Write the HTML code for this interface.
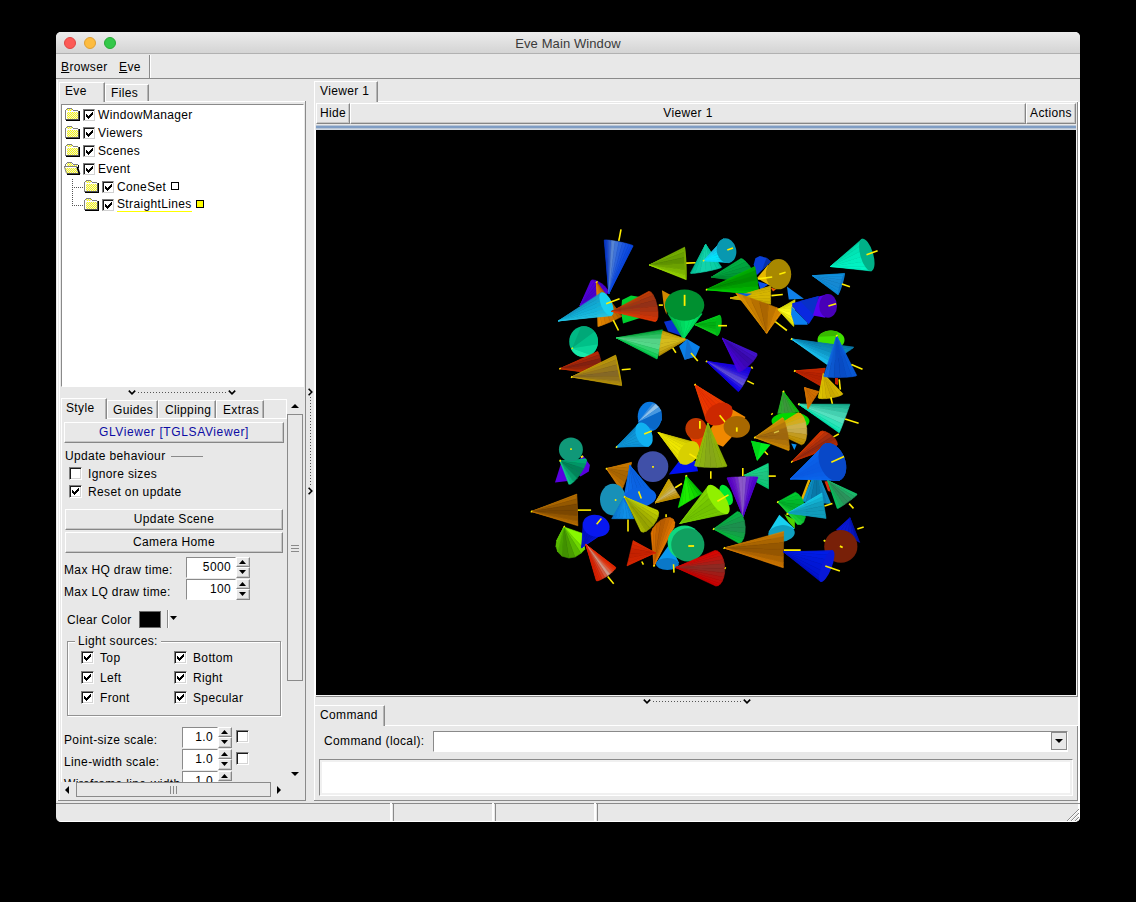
<!DOCTYPE html>
<html><head><meta charset="utf-8">
<style>
html,body{margin:0;padding:0;background:#000;}
body{width:1136px;height:902px;position:relative;overflow:hidden;font-family:"Liberation Sans",sans-serif;font-size:12px;color:#000;letter-spacing:0.36px;}
.a{position:absolute;box-sizing:border-box;}
.t{position:absolute;white-space:nowrap;line-height:14px;height:14px;}
#win{left:56px;top:32px;width:1024px;height:790px;background:#e8e8e8;border-radius:5px;overflow:hidden;}
#title{left:0;top:0;width:1024px;height:22px;background:linear-gradient(#ececec,#d4d4d4);border-bottom:1px solid #b1b1b1;}
.tl{position:absolute;width:12px;height:12px;border-radius:6px;top:5px;box-sizing:border-box;}
.sunk2{border:1px solid;border-color:#8a8a8a #fff #fff #8a8a8a;background:#fff;}
.btn{border:1px solid;border-color:#fff #868686 #868686 #fff;box-shadow:inset -1px -1px 0 #c6c6c6;background:#e8e8e8;text-align:center;}
.cb{border:1px solid;border-color:#7d7d7d #fff #fff #7d7d7d;box-shadow:inset 1px 1px 0 #1a1a1a, inset -1px -1px 0 #d4d4d4;background:#fff;}
.cbt{border:1px solid;border-color:#7d7d7d #d0d0d0 #d0d0d0 #7d7d7d;box-shadow:inset 1px 1px 0 #1a1a1a;background:#fff;}
.tab{border:1px solid;border-color:#fff #8a8a8a transparent #fff;border-bottom:none;background:#e8e8e8;box-shadow:inset -1px 0 0 #b5b5b5;}
</style></head><body>
<svg width="0" height="0" style="position:absolute"><defs>
<pattern id="dith" width="2" height="2" patternUnits="userSpaceOnUse"><rect width="2" height="2" fill="#ffff00"/><rect x="0" y="0" width="1" height="1" fill="#e8e8e8"/><rect x="1" y="1" width="1" height="1" fill="#e8e8e8"/></pattern>
</defs></svg>
<div id="win" class="a">
 <div id="title" class="a">
  <div class="tl" style="left:8px;background:#fc5b57;border:1px solid #df4744"></div>
  <div class="tl" style="left:28px;background:#fdbc40;border:1px solid #de9f34"></div>
  <div class="tl" style="left:48px;background:#34c84a;border:1px solid #27aa35"></div>
  <div class="t" style="left:0;width:1024px;text-align:center;top:5px;font-size:13px;color:#3a3a3a;letter-spacing:0.1px">Eve Main Window</div>
 </div>
</div>
<div id="ui" class="a" style="left:0;top:0;width:1136px;height:902px;clip-path:inset(32px 56px 80px 56px round 5px 5px 5px 5px);">
<div class="a " style="left:56px;top:78px;width:1024px;height:1px;background:#8a8a8a"></div><div class="a " style="left:149px;top:55px;width:1px;height:23px;background:#8a8a8a"></div><div class="a " style="left:150px;top:55px;width:1px;height:23px;background:#fff"></div><div class="t" style="left:61px;top:60px;"><u>B</u>rowser</div><div class="t" style="left:119px;top:60px;"><u>E</u>ve</div><div class="a " style="left:57px;top:80px;width:1px;height:721px;background:#fff"></div><div class="a tab" style="left:59px;top:82px;width:46px;height:20px;"></div><div class="t" style="left:65px;top:84px;">Eve</div><div class="a tab" style="left:105px;top:84px;width:44px;height:18px;"></div><div class="t" style="left:111px;top:86px;">Files</div><div class="a " style="left:105px;top:101px;width:200px;height:1px;background:#fff"></div><div class="a " style="left:59px;top:101px;width:1px;height:699px;background:#fff"></div><div class="a " style="left:305px;top:101px;width:1px;height:700px;background:#8a8a8a"></div><div class="a sunk2" style="left:61px;top:104px;width:243px;height:283px;"></div><svg class="a" style="left:65px;top:108px" width="15" height="13" viewBox="0 0 15 13" shape-rendering="crispEdges"><path d="M1,1 h6 v2 h6 v9 h-12 z" fill="#fff"/><rect x="2" y="1" width="5" height="2" fill="url(#dith)"/><rect x="2" y="4" width="11" height="7" fill="url(#dith)"/><path d="M0.5,2 V12 M2,0.5 H7 M1,1.5 H2 M7,1.5 H8 M8,2.5 H13" stroke="#808080" fill="none"/><path d="M1,11.5 H14 M13.5,3 V12" stroke="#555" fill="none"/><path d="M1,12.5 H15 M14.5,3 V13" stroke="#000" fill="none"/></svg><div class="a cbt" style="left:83px;top:109px;width:12px;height:12px"><div class="a" style="left:2px;top:2px"><svg width="7" height="7" viewBox="0 0 7 7" shape-rendering="crispEdges" style="display:block"><rect x="0" y="2" width="1" height="3"/><rect x="1" y="3" width="1" height="3"/><rect x="2" y="4" width="1" height="3"/><rect x="3" y="3" width="1" height="3"/><rect x="4" y="2" width="1" height="3"/><rect x="5" y="1" width="1" height="3"/><rect x="6" y="0" width="1" height="3"/></svg></div></div><div class="t" style="left:98px;top:108px;">WindowManager</div><svg class="a" style="left:65px;top:126px" width="15" height="13" viewBox="0 0 15 13" shape-rendering="crispEdges"><path d="M1,1 h6 v2 h6 v9 h-12 z" fill="#fff"/><rect x="2" y="1" width="5" height="2" fill="url(#dith)"/><rect x="2" y="4" width="11" height="7" fill="url(#dith)"/><path d="M0.5,2 V12 M2,0.5 H7 M1,1.5 H2 M7,1.5 H8 M8,2.5 H13" stroke="#808080" fill="none"/><path d="M1,11.5 H14 M13.5,3 V12" stroke="#555" fill="none"/><path d="M1,12.5 H15 M14.5,3 V13" stroke="#000" fill="none"/></svg><div class="a cbt" style="left:83px;top:127px;width:12px;height:12px"><div class="a" style="left:2px;top:2px"><svg width="7" height="7" viewBox="0 0 7 7" shape-rendering="crispEdges" style="display:block"><rect x="0" y="2" width="1" height="3"/><rect x="1" y="3" width="1" height="3"/><rect x="2" y="4" width="1" height="3"/><rect x="3" y="3" width="1" height="3"/><rect x="4" y="2" width="1" height="3"/><rect x="5" y="1" width="1" height="3"/><rect x="6" y="0" width="1" height="3"/></svg></div></div><div class="t" style="left:98px;top:126px;">Viewers</div><svg class="a" style="left:65px;top:144px" width="15" height="13" viewBox="0 0 15 13" shape-rendering="crispEdges"><path d="M1,1 h6 v2 h6 v9 h-12 z" fill="#fff"/><rect x="2" y="1" width="5" height="2" fill="url(#dith)"/><rect x="2" y="4" width="11" height="7" fill="url(#dith)"/><path d="M0.5,2 V12 M2,0.5 H7 M1,1.5 H2 M7,1.5 H8 M8,2.5 H13" stroke="#808080" fill="none"/><path d="M1,11.5 H14 M13.5,3 V12" stroke="#555" fill="none"/><path d="M1,12.5 H15 M14.5,3 V13" stroke="#000" fill="none"/></svg><div class="a cbt" style="left:83px;top:145px;width:12px;height:12px"><div class="a" style="left:2px;top:2px"><svg width="7" height="7" viewBox="0 0 7 7" shape-rendering="crispEdges" style="display:block"><rect x="0" y="2" width="1" height="3"/><rect x="1" y="3" width="1" height="3"/><rect x="2" y="4" width="1" height="3"/><rect x="3" y="3" width="1" height="3"/><rect x="4" y="2" width="1" height="3"/><rect x="5" y="1" width="1" height="3"/><rect x="6" y="0" width="1" height="3"/></svg></div></div><div class="t" style="left:98px;top:144px;">Scenes</div><svg class="a" style="left:64px;top:162px" width="17" height="13" viewBox="0 0 17 13" shape-rendering="crispEdges"><path d="M2,1 h6 v2 h6 v3 h-12 z" fill="#fff"/><rect x="3" y="1" width="5" height="2" fill="url(#dith)"/><rect x="3" y="3" width="10" height="2" fill="url(#dith)"/><path d="M1.5,5 V2 M3,0.5 H8 M2,1.5 H3 M8,1.5 H9 M9,2.5 H14" stroke="#808080" fill="none"/><path d="M0,5 h13 l2,7 h-12 z" fill="#fff" stroke="none"/><path d="M1,6 h11 l2,5 h-11 z" fill="url(#dith)"/><path d="M0,4.5 H13" stroke="#808080" fill="none"/><path d="M0.5,5 L2.5,11.5" stroke="#808080" fill="none" shape-rendering="auto"/><path d="M3,11.5 H16" stroke="#555" fill="none"/><path d="M3,12.5 H16 M14.5,3 V6" stroke="#000" fill="none"/><path d="M13.2,5 L15.5,12" stroke="#000" stroke-width="1.8" fill="none" shape-rendering="auto"/></svg><div class="a cbt" style="left:83px;top:163px;width:12px;height:12px"><div class="a" style="left:2px;top:2px"><svg width="7" height="7" viewBox="0 0 7 7" shape-rendering="crispEdges" style="display:block"><rect x="0" y="2" width="1" height="3"/><rect x="1" y="3" width="1" height="3"/><rect x="2" y="4" width="1" height="3"/><rect x="3" y="3" width="1" height="3"/><rect x="4" y="2" width="1" height="3"/><rect x="5" y="1" width="1" height="3"/><rect x="6" y="0" width="1" height="3"/></svg></div></div><div class="t" style="left:98px;top:162px;">Event</div><svg class="a" style="left:84px;top:180px" width="15" height="13" viewBox="0 0 15 13" shape-rendering="crispEdges"><path d="M1,1 h6 v2 h6 v9 h-12 z" fill="#fff"/><rect x="2" y="1" width="5" height="2" fill="url(#dith)"/><rect x="2" y="4" width="11" height="7" fill="url(#dith)"/><path d="M0.5,2 V12 M2,0.5 H7 M1,1.5 H2 M7,1.5 H8 M8,2.5 H13" stroke="#808080" fill="none"/><path d="M1,11.5 H14 M13.5,3 V12" stroke="#555" fill="none"/><path d="M1,12.5 H15 M14.5,3 V13" stroke="#000" fill="none"/></svg><div class="a cbt" style="left:102px;top:181px;width:12px;height:12px"><div class="a" style="left:2px;top:2px"><svg width="7" height="7" viewBox="0 0 7 7" shape-rendering="crispEdges" style="display:block"><rect x="0" y="2" width="1" height="3"/><rect x="1" y="3" width="1" height="3"/><rect x="2" y="4" width="1" height="3"/><rect x="3" y="3" width="1" height="3"/><rect x="4" y="2" width="1" height="3"/><rect x="5" y="1" width="1" height="3"/><rect x="6" y="0" width="1" height="3"/></svg></div></div><div class="t" style="left:117px;top:180px;">ConeSet</div><svg class="a" style="left:84px;top:198px" width="15" height="13" viewBox="0 0 15 13" shape-rendering="crispEdges"><path d="M1,1 h6 v2 h6 v9 h-12 z" fill="#fff"/><rect x="2" y="1" width="5" height="2" fill="url(#dith)"/><rect x="2" y="4" width="11" height="7" fill="url(#dith)"/><path d="M0.5,2 V12 M2,0.5 H7 M1,1.5 H2 M7,1.5 H8 M8,2.5 H13" stroke="#808080" fill="none"/><path d="M1,11.5 H14 M13.5,3 V12" stroke="#555" fill="none"/><path d="M1,12.5 H15 M14.5,3 V13" stroke="#000" fill="none"/></svg><div class="a cbt" style="left:102px;top:199px;width:12px;height:12px"><div class="a" style="left:2px;top:2px"><svg width="7" height="7" viewBox="0 0 7 7" shape-rendering="crispEdges" style="display:block"><rect x="0" y="2" width="1" height="3"/><rect x="1" y="3" width="1" height="3"/><rect x="2" y="4" width="1" height="3"/><rect x="3" y="3" width="1" height="3"/><rect x="4" y="2" width="1" height="3"/><rect x="5" y="1" width="1" height="3"/><rect x="6" y="0" width="1" height="3"/></svg></div></div><div class="t" style="left:117px;top:198px;border-bottom:1px solid #ffff00;height:13px;line-height:13px">StraightLines</div><svg class="a" style="left:70px;top:176px" width="16" height="32" shape-rendering="crispEdges"><path d="M2.5,3 V29 M2,11.5 H14 M2,29.5 H14" stroke="#555" stroke-dasharray="1,1" fill="none"/></svg><div class="a " style="left:171px;top:182px;width:8px;height:8px;border:1px solid #000;background:#fff"></div><div class="a " style="left:196px;top:200px;width:8px;height:8px;border:1px solid #000;background:#ffff00"></div><svg class="a" style="left:128px;top:390px" width="8" height="5"><path d="M0.8,0.6 L4,3.8 L7.2,0.6" fill="none" stroke="#000" stroke-width="1.6"/></svg><svg class="a" style="left:228px;top:390px" width="8" height="5"><path d="M0.8,0.6 L4,3.8 L7.2,0.6" fill="none" stroke="#000" stroke-width="1.6"/></svg><svg class="a" style="left:138px;top:392px" width="90" height="1" shape-rendering="crispEdges"><path d="M0,0.5 H90" stroke="#555" stroke-dasharray="1,2"/></svg><svg class="a" style="left:308px;top:388px" width="5" height="8"><path d="M0.6,0.8 L3.8,4 L0.6,7.2" fill="none" stroke="#000" stroke-width="1.6"/></svg><svg class="a" style="left:308px;top:487px" width="5" height="8"><path d="M0.6,0.8 L3.8,4 L0.6,7.2" fill="none" stroke="#000" stroke-width="1.6"/></svg><svg class="a" style="left:310px;top:397px" width="1" height="90" shape-rendering="crispEdges"><path d="M0.5,0 V90" stroke="#555" stroke-dasharray="1,2"/></svg><div class="a tab" style="left:61px;top:398px;width:46px;height:21px;"></div><div class="t" style="left:66px;top:401px;">Style</div><div class="a tab" style="left:107px;top:400px;width:51px;height:19px;"></div><div class="t" style="left:113px;top:403px;">Guides</div><div class="a tab" style="left:158px;top:400px;width:58px;height:19px;"></div><div class="t" style="left:165px;top:403px;">Clipping</div><div class="a tab" style="left:216px;top:400px;width:48px;height:19px;"></div><div class="t" style="left:223px;top:403px;">Extras</div><div class="a " style="left:107px;top:418px;width:180px;height:1px;background:#fff"></div><div class="a " style="left:264px;top:399px;width:23px;height:1px;background:#fff"></div><div class="a " style="left:286px;top:399px;width:1px;height:20px;background:#fff"></div><div class="a " style="left:61px;top:418px;width:1px;height:364px;background:#fff"></div><div class="a btn" style="left:64px;top:422px;width:220px;height:21px;line-height:18px;color:#0c0ca4;letter-spacing:0.62px">GLViewer [TGLSAViewer]</div><div class="t" style="left:65px;top:449px;">Update behaviour</div><div class="a " style="left:171px;top:456px;width:32px;height:1px;background:#8a8a8a"></div><div class="a cb" style="left:69px;top:467px;width:13px;height:13px;"></div><div class="t" style="left:88px;top:467px;">Ignore sizes</div><div class="a cb" style="left:69px;top:485px;width:13px;height:13px;"><div class="a" style="left:2px;top:2px"><svg width="7" height="7" viewBox="0 0 7 7" shape-rendering="crispEdges" style="display:block"><rect x="0" y="2" width="1" height="3"/><rect x="1" y="3" width="1" height="3"/><rect x="2" y="4" width="1" height="3"/><rect x="3" y="3" width="1" height="3"/><rect x="4" y="2" width="1" height="3"/><rect x="5" y="1" width="1" height="3"/><rect x="6" y="0" width="1" height="3"/></svg></div></div><div class="t" style="left:88px;top:485px;">Reset on update</div><div class="a btn" style="left:65px;top:509px;width:218px;height:21px;line-height:18px;">Update Scene</div><div class="a btn" style="left:65px;top:532px;width:218px;height:21px;line-height:18px;">Camera Home</div><div class="t" style="left:64px;top:563px;">Max HQ draw time:</div><div class="a sunk2" style="left:186px;top:557px;width:50px;height:21px;"></div><div class="t" style="left:186px;top:560px;width:45px;text-align:right">5000</div><div class="a btn" style="left:236px;top:557px;width:14px;height:10px;"></div><svg class="a" style="left:239px;top:560px" width="7" height="4"><path d="M0,4 L3.5,0 L7,4 z" fill="#000"/></svg><div class="a btn" style="left:236px;top:567px;width:14px;height:11px;"></div><svg class="a" style="left:239px;top:570px" width="7" height="4"><path d="M0,0 L3.5,4 L7,0 z" fill="#000"/></svg><div class="t" style="left:64px;top:585px;">Max LQ draw time:</div><div class="a sunk2" style="left:186px;top:579px;width:50px;height:21px;"></div><div class="t" style="left:186px;top:582px;width:45px;text-align:right">100</div><div class="a btn" style="left:236px;top:579px;width:14px;height:10px;"></div><svg class="a" style="left:239px;top:582px" width="7" height="4"><path d="M0,4 L3.5,0 L7,4 z" fill="#000"/></svg><div class="a btn" style="left:236px;top:589px;width:14px;height:11px;"></div><svg class="a" style="left:239px;top:592px" width="7" height="4"><path d="M0,0 L3.5,4 L7,0 z" fill="#000"/></svg><div class="t" style="left:67px;top:613px;">Clear Color</div><div class="a " style="left:139px;top:611px;width:22px;height:17px;background:#000;border:1px solid #6a6a6a"></div><div class="a " style="left:167px;top:610px;width:1px;height:18px;background:#8a8a8a"></div><div class="a " style="left:168px;top:610px;width:1px;height:18px;background:#fff"></div><svg class="a" style="left:170px;top:616px" width="7" height="4"><path d="M0,0 L3.5,4 L7,0 z" fill="#000"/></svg><div class="a " style="left:68px;top:642px;width:214px;height:75px;border:1px solid #fff;"></div><div class="a " style="left:67px;top:641px;width:214px;height:75px;border:1px solid #929292;"></div><div class="a " style="left:75px;top:634px;width:86px;height:14px;background:#e8e8e8"></div><div class="t" style="left:78px;top:634px;">Light sources:</div><div class="a cb" style="left:81px;top:651px;width:13px;height:13px;"><div class="a" style="left:2px;top:2px"><svg width="7" height="7" viewBox="0 0 7 7" shape-rendering="crispEdges" style="display:block"><rect x="0" y="2" width="1" height="3"/><rect x="1" y="3" width="1" height="3"/><rect x="2" y="4" width="1" height="3"/><rect x="3" y="3" width="1" height="3"/><rect x="4" y="2" width="1" height="3"/><rect x="5" y="1" width="1" height="3"/><rect x="6" y="0" width="1" height="3"/></svg></div></div><div class="t" style="left:100px;top:651px;">Top</div><div class="a cb" style="left:174px;top:651px;width:13px;height:13px;"><div class="a" style="left:2px;top:2px"><svg width="7" height="7" viewBox="0 0 7 7" shape-rendering="crispEdges" style="display:block"><rect x="0" y="2" width="1" height="3"/><rect x="1" y="3" width="1" height="3"/><rect x="2" y="4" width="1" height="3"/><rect x="3" y="3" width="1" height="3"/><rect x="4" y="2" width="1" height="3"/><rect x="5" y="1" width="1" height="3"/><rect x="6" y="0" width="1" height="3"/></svg></div></div><div class="t" style="left:193px;top:651px;">Bottom</div><div class="a cb" style="left:81px;top:671px;width:13px;height:13px;"><div class="a" style="left:2px;top:2px"><svg width="7" height="7" viewBox="0 0 7 7" shape-rendering="crispEdges" style="display:block"><rect x="0" y="2" width="1" height="3"/><rect x="1" y="3" width="1" height="3"/><rect x="2" y="4" width="1" height="3"/><rect x="3" y="3" width="1" height="3"/><rect x="4" y="2" width="1" height="3"/><rect x="5" y="1" width="1" height="3"/><rect x="6" y="0" width="1" height="3"/></svg></div></div><div class="t" style="left:100px;top:671px;">Left</div><div class="a cb" style="left:174px;top:671px;width:13px;height:13px;"><div class="a" style="left:2px;top:2px"><svg width="7" height="7" viewBox="0 0 7 7" shape-rendering="crispEdges" style="display:block"><rect x="0" y="2" width="1" height="3"/><rect x="1" y="3" width="1" height="3"/><rect x="2" y="4" width="1" height="3"/><rect x="3" y="3" width="1" height="3"/><rect x="4" y="2" width="1" height="3"/><rect x="5" y="1" width="1" height="3"/><rect x="6" y="0" width="1" height="3"/></svg></div></div><div class="t" style="left:193px;top:671px;">Right</div><div class="a cb" style="left:81px;top:691px;width:13px;height:13px;"><div class="a" style="left:2px;top:2px"><svg width="7" height="7" viewBox="0 0 7 7" shape-rendering="crispEdges" style="display:block"><rect x="0" y="2" width="1" height="3"/><rect x="1" y="3" width="1" height="3"/><rect x="2" y="4" width="1" height="3"/><rect x="3" y="3" width="1" height="3"/><rect x="4" y="2" width="1" height="3"/><rect x="5" y="1" width="1" height="3"/><rect x="6" y="0" width="1" height="3"/></svg></div></div><div class="t" style="left:100px;top:691px;">Front</div><div class="a cb" style="left:174px;top:691px;width:13px;height:13px;"><div class="a" style="left:2px;top:2px"><svg width="7" height="7" viewBox="0 0 7 7" shape-rendering="crispEdges" style="display:block"><rect x="0" y="2" width="1" height="3"/><rect x="1" y="3" width="1" height="3"/><rect x="2" y="4" width="1" height="3"/><rect x="3" y="3" width="1" height="3"/><rect x="4" y="2" width="1" height="3"/><rect x="5" y="1" width="1" height="3"/><rect x="6" y="0" width="1" height="3"/></svg></div></div><div class="t" style="left:193px;top:691px;">Specular</div><div class="t" style="left:64px;top:733px;">Point-size scale:</div><div class="a sunk2" style="left:182px;top:727px;width:36px;height:21px;"></div><div class="t" style="left:182px;top:730px;width:31px;text-align:right">1.0</div><div class="a btn" style="left:218px;top:727px;width:14px;height:10px;"></div><svg class="a" style="left:221px;top:730px" width="7" height="4"><path d="M0,4 L3.5,0 L7,4 z" fill="#000"/></svg><div class="a btn" style="left:218px;top:737px;width:14px;height:11px;"></div><svg class="a" style="left:221px;top:740px" width="7" height="4"><path d="M0,0 L3.5,4 L7,0 z" fill="#000"/></svg><div class="a cb" style="left:236px;top:730px;width:13px;height:13px;"></div><div class="t" style="left:64px;top:755px;">Line-width scale:</div><div class="a sunk2" style="left:182px;top:749px;width:36px;height:21px;"></div><div class="t" style="left:182px;top:752px;width:31px;text-align:right">1.0</div><div class="a btn" style="left:218px;top:749px;width:14px;height:10px;"></div><svg class="a" style="left:221px;top:752px" width="7" height="4"><path d="M0,4 L3.5,0 L7,4 z" fill="#000"/></svg><div class="a btn" style="left:218px;top:759px;width:14px;height:11px;"></div><svg class="a" style="left:221px;top:762px" width="7" height="4"><path d="M0,0 L3.5,4 L7,0 z" fill="#000"/></svg><div class="a cb" style="left:236px;top:752px;width:13px;height:13px;"></div><div class="a" style="left:60px;top:771px;width:226px;height:11px;overflow:hidden"><div class="t" style="left:4px;top:6px">Wireframe line-width</div><div class="a sunk2" style="left:122px;top:0;width:36px;height:20px"></div><div class="t" style="left:122px;top:3px;width:31px;text-align:right">1.0</div><div class="a btn" style="left:158px;top:0;width:14px;height:10px"></div><svg class="a" style="left:161px;top:3px" width="7" height="4"><path d="M0,4 L3.5,0 L7,4 z" fill="#000"/></svg></div><svg class="a" style="left:291px;top:404px" width="8" height="4"><path d="M0,4 L4,0 L8,4 z" fill="#000"/></svg><div class="a " style="left:287px;top:414px;width:16px;height:267px;border:1px solid #8a8a8a"></div><div class="a " style="left:291px;top:545px;width:8px;height:1px;background:#8a8a8a"></div><div class="a " style="left:291px;top:548px;width:8px;height:1px;background:#8a8a8a"></div><div class="a " style="left:291px;top:551px;width:8px;height:1px;background:#8a8a8a"></div><svg class="a" style="left:291px;top:772px" width="8" height="4"><path d="M0,0 L4,4 L8,0 z" fill="#000"/></svg><svg class="a" style="left:65px;top:786px" width="4" height="8"><path d="M4,0 L0,4 L4,8 z" fill="#000"/></svg><div class="a " style="left:76px;top:782px;width:195px;height:15px;border:1px solid #8a8a8a"></div><div class="a " style="left:170px;top:786px;width:1px;height:8px;background:#8a8a8a"></div><div class="a " style="left:173px;top:786px;width:1px;height:8px;background:#8a8a8a"></div><div class="a " style="left:176px;top:786px;width:1px;height:8px;background:#8a8a8a"></div><svg class="a" style="left:277px;top:786px" width="4" height="8"><path d="M0,0 L4,4 L0,8 z" fill="#000"/></svg><div class="a " style="left:58px;top:800px;width:248px;height:1px;background:#8a8a8a"></div><div class="a " style="left:314px;top:83px;width:1px;height:718px;background:#fff"></div><div class="a " style="left:1077px;top:102px;width:1px;height:595px;background:#8a8a8a"></div><div class="a " style="left:1077px;top:725px;width:1px;height:76px;background:#8a8a8a"></div><div class="a " style="left:1078px;top:102px;width:2px;height:720px;background:#fff"></div><div class="a " style="left:316px;top:696px;width:762px;height:1px;background:#8a8a8a"></div><div class="a tab" style="left:314px;top:81px;width:64px;height:21px;"></div><div class="t" style="left:320px;top:84px;">Viewer 1</div><div class="a " style="left:378px;top:101px;width:700px;height:1px;background:#fff"></div><div class="a btn" style="left:316px;top:103px;width:34px;height:21px;line-height:18px;">Hide</div><div class="a btn" style="left:350px;top:103px;width:676px;height:21px;line-height:18px;">Viewer 1</div><div class="a btn" style="left:1026px;top:103px;width:50px;height:21px;line-height:18px;">Actions</div><div class="a " style="left:316px;top:125px;width:760px;height:1px;background:#b9c6d6"></div><div class="a " style="left:316px;top:126px;width:760px;height:2px;background:#7f9dc4"></div><div class="a " style="left:316px;top:128px;width:760px;height:1px;background:#b9c6d6"></div><div class="a " style="left:315px;top:129px;width:762px;height:567px;background:#000;border:1px solid;border-color:#d0d8e2 #f4f4f4 #f4f4f4 #fff"></div><svg class="a" style="left:316px;top:130px" width="760" height="565" viewBox="316 130 760 565" stroke-linejoin="round"><polygon points="580,305.5 591,280.5 592.7,279.9" fill="#5800e4" stroke="#5800e4" stroke-width="0.6"/><polygon points="580,305.5 592.7,279.9 595.5,280.4" fill="#5300dc" stroke="#5300dc" stroke-width="0.6"/><polygon points="580,305.5 595.5,280.4 598.8,281.9" fill="#4f00d4" stroke="#4f00d4" stroke-width="0.6"/><polygon points="580,305.5 598.8,281.9 602.2,284.1" fill="#4a00cc" stroke="#4a00cc" stroke-width="0.6"/><polygon points="580,305.5 602.2,284.1 605.2,286.7" fill="#4a00cc" stroke="#4a00cc" stroke-width="0.6"/><polygon points="580,305.5 605.2,286.7 607.3,289.4" fill="#4f00d4" stroke="#4f00d4" stroke-width="0.6"/><polygon points="580,305.5 607.3,289.4 608.2,291.7" fill="#5300dc" stroke="#5300dc" stroke-width="0.6"/><polygon points="580,305.5 608.2,291.7 607.7,293.2" fill="#5800e4" stroke="#5800e4" stroke-width="0.6"/><polygon points="608.8,293.5 604.2,240.1 604.8,239.9" fill="#0838c8" stroke="#0838c8" stroke-width="0.6"/><polygon points="608.8,293.5 604.8,239.9 606.2,239.9" fill="#0b3bc8" stroke="#0b3bc8" stroke-width="0.6"/><polygon points="608.8,293.5 606.2,239.9 608.6,240.1" fill="#1645ca" stroke="#1645ca" stroke-width="0.6"/><polygon points="608.8,293.5 608.6,240.1 611.6,240.5" fill="#2d5ccd" stroke="#2d5ccd" stroke-width="0.6"/><polygon points="608.8,293.5 611.6,240.5 615.1,241.1" fill="#5785d4" stroke="#5785d4" stroke-width="0.6"/><polygon points="608.8,293.5 615.1,241.1 618.9,241.8" fill="#3f73d8" stroke="#3f73d8" stroke-width="0.6"/><polygon points="608.8,293.5 618.9,241.8 622.6,242.6" fill="#2a62db" stroke="#2a62db" stroke-width="0.6"/><polygon points="608.8,293.5 622.6,242.6 626.1,243.4" fill="#1c56dd" stroke="#1c56dd" stroke-width="0.6"/><polygon points="608.8,293.5 626.1,243.4 629,244.2" fill="#124fdf" stroke="#124fdf" stroke-width="0.6"/><polygon points="608.8,293.5 629,244.2 631.3,244.9" fill="#0d4ae0" stroke="#0d4ae0" stroke-width="0.6"/><polygon points="608.8,293.5 631.3,244.9 632.7,245.5" fill="#0b49e0" stroke="#0b49e0" stroke-width="0.6"/><polygon points="608.8,293.5 632.7,245.5 633.1,245.9" fill="#0a48e0" stroke="#0a48e0" stroke-width="0.6"/><line x1="621" y1="229.4" x2="618.8" y2="240.9" stroke="#ffee00" stroke-width="1.6"/><polygon points="649.3,265 684.6,247.2 684.7,248.4" fill="#7eb900" stroke="#7eb900" stroke-width="0.6"/><polygon points="649.3,265 684.7,248.4 684.8,252" fill="#73ac00" stroke="#73ac00" stroke-width="0.6"/><polygon points="649.3,265 684.8,252 685.1,257.2" fill="#689f00" stroke="#689f00" stroke-width="0.6"/><polygon points="649.3,265 685.1,257.2 685.4,263.4" fill="#5d9100" stroke="#5d9100" stroke-width="0.6"/><polygon points="649.3,265 685.4,263.4 685.7,269.7" fill="#6ba100" stroke="#6ba100" stroke-width="0.6"/><polygon points="649.3,265 685.7,269.7 686,274.9" fill="#7bb400" stroke="#7bb400" stroke-width="0.6"/><polygon points="649.3,265 686,274.9 686.1,278.5" fill="#8bc700" stroke="#8bc700" stroke-width="0.6"/><polygon points="649.3,265 686.1,278.5 686.2,279.7" fill="#9cda00" stroke="#9cda00" stroke-width="0.6"/><ellipse cx="685.4" cy="263.4" rx="16.3" ry="1.1" fill="#78a800" transform="rotate(87.2 685.4 263.4)"/><line x1="686.2" y1="263.1" x2="695.7" y2="262.7" stroke="#ffee00" stroke-width="1.6"/><polygon points="622,300 631,295.5 640,297 640,318 623,323.5 621,312" fill="#00d030"/><polygon points="596.6,282.1 597.9,326.5 598.9,326.3" fill="#ec8d00" stroke="#ec8d00" stroke-width="0.6"/><polygon points="596.6,282.1 598.9,326.3 601.6,325.4" fill="#e48600" stroke="#e48600" stroke-width="0.6"/><polygon points="596.6,282.1 601.6,325.4 605.5,323.9" fill="#db7f00" stroke="#db7f00" stroke-width="0.6"/><polygon points="596.6,282.1 605.5,323.9 610.2,322" fill="#d37900" stroke="#d37900" stroke-width="0.6"/><polygon points="596.6,282.1 610.2,322 614.8,320" fill="#ca7200" stroke="#ca7200" stroke-width="0.6"/><polygon points="596.6,282.1 614.8,320 618.6,318.1" fill="#bf6900" stroke="#bf6900" stroke-width="0.6"/><polygon points="596.6,282.1 618.6,318.1 621.2,316.8" fill="#b35f00" stroke="#b35f00" stroke-width="0.6"/><polygon points="596.6,282.1 621.2,316.8 622,316.2" fill="#a65500" stroke="#a65500" stroke-width="0.6"/><line x1="613.3" y1="320.1" x2="618.5" y2="330.5" stroke="#ffee00" stroke-width="1.6"/><polygon points="558.5,320.9 601.4,292.4 601.8,293.3" fill="#1794c3" stroke="#1794c3" stroke-width="0.6"/><polygon points="558.5,320.9 601.8,293.3 602.9,295.8" fill="#159cc9" stroke="#159cc9" stroke-width="0.6"/><polygon points="558.5,320.9 602.9,295.8 604.6,299.6" fill="#13a4cf" stroke="#13a4cf" stroke-width="0.6"/><polygon points="558.5,320.9 604.6,299.6 606.5,304" fill="#11acd5" stroke="#11acd5" stroke-width="0.6"/><polygon points="558.5,320.9 606.5,304 608.5,308.5" fill="#13b3da" stroke="#13b3da" stroke-width="0.6"/><polygon points="558.5,320.9 608.5,308.5 610.2,312.3" fill="#19b9de" stroke="#19b9de" stroke-width="0.6"/><polygon points="558.5,320.9 610.2,312.3 611.3,314.8" fill="#1fbfe2" stroke="#1fbfe2" stroke-width="0.6"/><polygon points="558.5,320.9 611.3,314.8 611.7,315.7" fill="#25c5e6" stroke="#25c5e6" stroke-width="0.6"/><ellipse cx="606.5" cy="304" rx="12.7" ry="5.5" fill="#18d0f0" transform="rotate(66.2 606.5 304)"/><line x1="606.1" y1="303.8" x2="619.6" y2="298.7" stroke="#ffee00" stroke-width="1.6"/><line x1="596.3" y1="281.5" x2="597" y2="282.5" stroke="#ffee00" stroke-width="2.2"/><polygon points="611.7,311.4 648.9,291.3 651.1,292.2" fill="#c63e04" stroke="#c63e04" stroke-width="0.6"/><polygon points="611.7,311.4 651.1,292.2 653.4,295.3" fill="#b3390b" stroke="#b3390b" stroke-width="0.6"/><polygon points="611.7,311.4 653.4,295.3 655.6,300.1" fill="#a03412" stroke="#a03412" stroke-width="0.6"/><polygon points="611.7,311.4 655.6,300.1 657.2,305.9" fill="#933017" stroke="#933017" stroke-width="0.6"/><polygon points="611.7,311.4 657.2,305.9 658,311.7" fill="#a63212" stroke="#a63212" stroke-width="0.6"/><polygon points="611.7,311.4 658,311.7 658,316.8" fill="#b9340d" stroke="#b9340d" stroke-width="0.6"/><polygon points="611.7,311.4 658,316.8 657,320.3" fill="#cc3508" stroke="#cc3508" stroke-width="0.6"/><polygon points="611.7,311.4 657,320.3 655.3,321.7" fill="#df3703" stroke="#df3703" stroke-width="0.6"/><line x1="658.8" y1="305.1" x2="662.9" y2="305.1" stroke="#ffee00" stroke-width="1.6"/><polygon points="661.9,290.3 670.3,294.8 668,300 666.4,314.6 664,307.5" fill="#d08800"/><polygon points="664,321.7 672,320.1 682.2,336 668,331.2" fill="#0a30d0"/><polygon points="683.5,339.2 667.9,313.8 669.2,313.8" fill="#00b64b" stroke="#00b64b" stroke-width="0.6"/><polygon points="683.5,339.2 669.2,313.8 672.9,313.8" fill="#00c252" stroke="#00c252" stroke-width="0.6"/><polygon points="683.5,339.2 672.9,313.8 678.5,313.8" fill="#00cd59" stroke="#00cd59" stroke-width="0.6"/><polygon points="683.5,339.2 678.5,313.8 685,313.8" fill="#00d95f" stroke="#00d95f" stroke-width="0.6"/><polygon points="683.5,339.2 685,313.8 691.5,313.8" fill="#00e466" stroke="#00e466" stroke-width="0.6"/><polygon points="683.5,339.2 691.5,313.8 697.1,313.8" fill="#00e464" stroke="#00e464" stroke-width="0.6"/><polygon points="683.5,339.2 697.1,313.8 700.8,313.8" fill="#00e060" stroke="#00e060" stroke-width="0.6"/><polygon points="683.5,339.2 700.8,313.8 702.1,313.8" fill="#00da5a" stroke="#00da5a" stroke-width="0.6"/><ellipse cx="684.6" cy="305.1" rx="19.7" ry="15.6" fill="#009030" transform="rotate(0 684.6 305.1)"/><line x1="684.6" y1="294.8" x2="684.6" y2="305.9" stroke="#ffee00" stroke-width="1.8"/><ellipse cx="583.6" cy="341.6" rx="14.4" ry="15.4" fill="#00b884" transform="rotate(0 583.6 341.6)"/><polygon points="572.2,348.2 581.1,326.4 583,326.2 584.9,326.3 586.7,326.6 588.5,327.1 590.2,327.9 591.9,329 593.3,330.2 594.6,331.7" fill="#00a878"/><polygon points="572.2,348.2 594.6,331.7 595.6,333 596.4,334.5 597,336 597.5,337.6 597.8,339.3 598,340.9 598,342.6 597.8,344.3" fill="#00c088"/><polygon points="572.2,348.2 597.8,344.3 597.4,345.9 596.9,347.5 596.2,349 595.4,350.4 594.4,351.8 593.3,353 592.1,354 590.8,354.9" fill="#08d498"/><polygon points="572.2,348.2 590.8,354.9 588.2,356.2 585.5,356.9 582.7,357 579.9,356.5 577.2,355.4 574.8,353.8 572.8,351.8 571.1,349.3" fill="#18e8a8"/><line x1="571.8" y1="347.8" x2="572.6" y2="348.8" stroke="#ffee00" stroke-width="1.8"/><polygon points="616.4,337.9 662.4,329.7 662.5,330.9" fill="#04aa3b" stroke="#04aa3b" stroke-width="0.6"/><polygon points="616.4,337.9 662.5,330.9 662.2,334.1" fill="#16b34c" stroke="#16b34c" stroke-width="0.6"/><polygon points="616.4,337.9 662.2,334.1 661.5,338.9" fill="#31c165" stroke="#31c165" stroke-width="0.6"/><polygon points="616.4,337.9 661.5,338.9 660.5,344.5" fill="#54d286" stroke="#54d286" stroke-width="0.6"/><polygon points="616.4,337.9 660.5,344.5 659.4,350.1" fill="#54d889" stroke="#54d889" stroke-width="0.6"/><polygon points="616.4,337.9 659.4,350.1 658.3,354.8" fill="#31d16e" stroke="#31d16e" stroke-width="0.6"/><polygon points="616.4,337.9 658.3,354.8 657.4,357.9" fill="#16cc59" stroke="#16cc59" stroke-width="0.6"/><polygon points="616.4,337.9 657.4,357.9 656.9,359" fill="#04c94b" stroke="#04c94b" stroke-width="0.6"/><polygon points="686.2,339.5 662.9,330.9 662.5,331.9" fill="#c39d04" stroke="#c39d04" stroke-width="0.6"/><polygon points="686.2,339.5 662.5,331.9 661.9,334.6" fill="#c9a70c" stroke="#c9a70c" stroke-width="0.6"/><polygon points="686.2,339.5 661.9,334.6 661.2,338.7" fill="#cfb114" stroke="#cfb114" stroke-width="0.6"/><polygon points="686.2,339.5 661.2,338.7 660.4,343.4" fill="#d5bb1c" stroke="#d5bb1c" stroke-width="0.6"/><polygon points="686.2,339.5 660.4,343.4 659.8,348.2" fill="#d3b91c" stroke="#d3b91c" stroke-width="0.6"/><polygon points="686.2,339.5 659.8,348.2 659.3,352.2" fill="#c9ab14" stroke="#c9ab14" stroke-width="0.6"/><polygon points="686.2,339.5 659.3,352.2 659.1,354.9" fill="#bf9d0c" stroke="#bf9d0c" stroke-width="0.6"/><polygon points="686.2,339.5 659.1,354.9 659.2,355.8" fill="#b58f04" stroke="#b58f04" stroke-width="0.6"/><line x1="672.7" y1="347.9" x2="675.9" y2="352.7" stroke="#ffee00" stroke-width="1.6"/><polygon points="687,338.9 700,346.8 695.7,356.6 684.6,359.8 679.1,346.3" fill="#0a80e8"/><polygon points="687,338.9 695.7,356.6 684.6,359.8" fill="#1070d0"/><line x1="691" y1="353.1" x2="697.8" y2="361" stroke="#ffee00" stroke-width="1.6"/><polygon points="705.6,244.3 690.3,273.2 691.5,273.5" fill="#03bc94" stroke="#03bc94" stroke-width="0.6"/><polygon points="705.6,244.3 691.5,273.5 694.9,273.2" fill="#08c49c" stroke="#08c49c" stroke-width="0.6"/><polygon points="705.6,244.3 694.9,273.2 700,272.5" fill="#0ecba3" stroke="#0ecba3" stroke-width="0.6"/><polygon points="705.6,244.3 700,272.5 706,271.5" fill="#13d3ab" stroke="#13d3ab" stroke-width="0.6"/><polygon points="705.6,244.3 706,271.5 712,270.2" fill="#10d2aa" stroke="#10d2aa" stroke-width="0.6"/><polygon points="705.6,244.3 712,270.2 717,269" fill="#0bcfa7" stroke="#0bcfa7" stroke-width="0.6"/><polygon points="705.6,244.3 717,269 720.4,267.9" fill="#07cca4" stroke="#07cca4" stroke-width="0.6"/><polygon points="705.6,244.3 720.4,267.9 721.6,267.2" fill="#02c9a1" stroke="#02c9a1" stroke-width="0.6"/><polygon points="703.5,260.7 723.8,238.5 724,239.4" fill="#24bdea" stroke="#24bdea" stroke-width="0.6"/><polygon points="703.5,260.7 724,239.4 724.6,242" fill="#1cc7ef" stroke="#1cc7ef" stroke-width="0.6"/><polygon points="703.5,260.7 724.6,242 725.5,246" fill="#13d1f4" stroke="#13d1f4" stroke-width="0.6"/><polygon points="703.5,260.7 725.5,246 726.5,250.6" fill="#0bdbf9" stroke="#0bdbf9" stroke-width="0.6"/><polygon points="703.5,260.7 726.5,250.6 727.6,255.2" fill="#02e5fe" stroke="#02e5fe" stroke-width="0.6"/><polygon points="703.5,260.7 727.6,255.2 728.5,259.2" fill="#04e3fc" stroke="#04e3fc" stroke-width="0.6"/><polygon points="703.5,260.7 728.5,259.2 729.1,261.8" fill="#08dbf7" stroke="#08dbf7" stroke-width="0.6"/><polygon points="703.5,260.7 729.1,261.8 729.3,262.7" fill="#0ed4f2" stroke="#0ed4f2" stroke-width="0.6"/><ellipse cx="726.5" cy="250.6" rx="12.4" ry="9.7" fill="#0898b0" transform="rotate(77.2 726.5 250.6)"/><line x1="727.3" y1="250.1" x2="733" y2="248" stroke="#ffee00" stroke-width="1.6"/><line x1="703.2" y1="260.2" x2="704" y2="261.2" stroke="#ffee00" stroke-width="2"/><polygon points="711.6,277.1 741,258.5 743,259.2" fill="#00b446" stroke="#00b446" stroke-width="0.6"/><polygon points="711.6,277.1 743,259.2 746,261.8" fill="#00ac42" stroke="#00ac42" stroke-width="0.6"/><polygon points="711.6,277.1 746,261.8 749.4,265.8" fill="#00a43e" stroke="#00a43e" stroke-width="0.6"/><polygon points="711.6,277.1 749.4,265.8 752.7,270.7" fill="#009c3a" stroke="#009c3a" stroke-width="0.6"/><polygon points="711.6,277.1 752.7,270.7 755.5,275.6" fill="#009637" stroke="#009637" stroke-width="0.6"/><polygon points="711.6,277.1 755.5,275.6 757.3,279.9" fill="#009235" stroke="#009235" stroke-width="0.6"/><polygon points="711.6,277.1 757.3,279.9 757.8,282.8" fill="#008e33" stroke="#008e33" stroke-width="0.6"/><polygon points="711.6,277.1 757.8,282.8 757,284" fill="#008a31" stroke="#008a31" stroke-width="0.6"/><polygon points="753.7,264.4 755.4,258.3 759.8,256.1 766.5,257.7 770.9,261.6 756.5,275.5" fill="#0a40d8"/><polygon points="766.5,257.7 770.9,261.6 762,270" fill="#0830a8"/><polygon points="706.3,289.7 754.7,266.5 755,267.5" fill="#00bb00" stroke="#00bb00" stroke-width="0.6"/><polygon points="706.3,289.7 755,267.5 755.6,270.6" fill="#00a800" stroke="#00a800" stroke-width="0.6"/><polygon points="706.3,289.7 755.6,270.6 756.4,275.2" fill="#009500" stroke="#009500" stroke-width="0.6"/><polygon points="706.3,289.7 756.4,275.2 757.3,280.6" fill="#008d00" stroke="#008d00" stroke-width="0.6"/><polygon points="706.3,289.7 757.3,280.6 758.1,286" fill="#009f00" stroke="#009f00" stroke-width="0.6"/><polygon points="706.3,289.7 758.1,286 758.7,290.6" fill="#00b000" stroke="#00b000" stroke-width="0.6"/><polygon points="706.3,289.7 758.7,290.6 759,293.7" fill="#00c200" stroke="#00c200" stroke-width="0.6"/><polygon points="706.3,289.7 759,293.7 759,294.8" fill="#00d300" stroke="#00d300" stroke-width="0.6"/><line x1="706" y1="289.3" x2="707" y2="290" stroke="#ffee00" stroke-width="2"/><polygon points="757.9,281.3 768.2,284.5 760.3,290" fill="#0a50e8"/><polygon points="770.6,287.6 776.1,289.2 773,291.6" fill="#f05800"/><polygon points="730.1,298.3 770.6,286 770.6,286.7" fill="#caaa00" stroke="#caaa00" stroke-width="0.6"/><polygon points="730.1,298.3 770.6,286.7 770.6,288.7" fill="#ceae00" stroke="#ceae00" stroke-width="0.6"/><polygon points="730.1,298.3 770.6,288.7 770.6,291.6" fill="#d2b200" stroke="#d2b200" stroke-width="0.6"/><polygon points="730.1,298.3 770.6,291.6 770.6,295.1" fill="#d6b600" stroke="#d6b600" stroke-width="0.6"/><polygon points="730.1,298.3 770.6,295.1 770.6,298.7" fill="#d6b600" stroke="#d6b600" stroke-width="0.6"/><polygon points="730.1,298.3 770.6,298.7 770.6,301.6" fill="#d2b200" stroke="#d2b200" stroke-width="0.6"/><polygon points="730.1,298.3 770.6,301.6 770.6,303.6" fill="#ceae00" stroke="#ceae00" stroke-width="0.6"/><polygon points="730.1,298.3 770.6,303.6 770.6,304.3" fill="#caaa00" stroke="#caaa00" stroke-width="0.6"/><line x1="771.4" y1="295.6" x2="782.8" y2="294.5" stroke="#ffee00" stroke-width="1.6"/><polygon points="768.2,264.6 757.1,278.1 770.6,286" fill="#e8b800"/><ellipse cx="778.5" cy="274.2" rx="12.7" ry="15.1" fill="#a88800" transform="rotate(0 778.5 274.2)"/><line x1="779.3" y1="274.2" x2="785.6" y2="272.3" stroke="#ffee00" stroke-width="1.6"/><line x1="757.9" y1="278.9" x2="772.2" y2="277" stroke="#ffee00" stroke-width="1.6"/><polygon points="737.6,293 752,293.8 742,298.5" fill="#0a60e0"/><polygon points="766.6,333.2 735.7,293.2 737.4,293.6" fill="#e89900" stroke="#e89900" stroke-width="0.6"/><polygon points="766.6,333.2 737.4,293.6 742.6,295.2" fill="#d78c00" stroke="#d78c00" stroke-width="0.6"/><polygon points="766.6,333.2 742.6,295.2 750.2,297.9" fill="#c77e00" stroke="#c77e00" stroke-width="0.6"/><polygon points="766.6,333.2 750.2,297.9 759.3,301.2" fill="#b77000" stroke="#b77000" stroke-width="0.6"/><polygon points="766.6,333.2 759.3,301.2 768.5,304.5" fill="#aa6500" stroke="#aa6500" stroke-width="0.6"/><polygon points="766.6,333.2 768.5,304.5 776.2,307.5" fill="#be7400" stroke="#be7400" stroke-width="0.6"/><polygon points="766.6,333.2 776.2,307.5 781.4,309.7" fill="#d28200" stroke="#d28200" stroke-width="0.6"/><polygon points="766.6,333.2 781.4,309.7 783.3,310.6" fill="#e69100" stroke="#e69100" stroke-width="0.6"/><line x1="775.3" y1="321.7" x2="786.9" y2="330.5" stroke="#ffee00" stroke-width="1.6"/><polygon points="778,309.5 795.1,299.5 795,300.5" fill="#cece04" stroke="#cece04" stroke-width="0.6"/><polygon points="778,309.5 795,300.5 794.9,303.5" fill="#dbdb0b" stroke="#dbdb0b" stroke-width="0.6"/><polygon points="778,309.5 794.9,303.5 794.6,307.8" fill="#e7e712" stroke="#e7e712" stroke-width="0.6"/><polygon points="778,309.5 794.6,307.8 794.4,313" fill="#f4f419" stroke="#f4f419" stroke-width="0.6"/><polygon points="778,309.5 794.4,313 794.1,318.2" fill="#fefe1f" stroke="#fefe1f" stroke-width="0.6"/><polygon points="778,309.5 794.1,318.2 793.8,322.5" fill="#f3f316" stroke="#f3f316" stroke-width="0.6"/><polygon points="778,309.5 793.8,322.5 793.7,325.5" fill="#e8e80d" stroke="#e8e80d" stroke-width="0.6"/><polygon points="778,309.5 793.7,325.5 793.6,326.5" fill="#dddd04" stroke="#dddd04" stroke-width="0.6"/><polygon points="786.9,286.5 803.9,298.7 788.8,299.5" fill="#1080e8"/><polygon points="792.2,303.2 818.8,296 814.4,315.4 808.8,324.3 806.6,322 792.2,306.5" fill="#0a28e0"/><polygon points="800,301 818.8,296 814.4,315.4" fill="#0830c8"/><polygon points="791.6,306.5 807.2,322.6 807.7,324.8 794.4,324.8 791.1,314.3" fill="#0a80f0"/><polygon points="818.9,296.4 812.9,315.4 825.3,317.8 828,294" fill="#5800f0"/><ellipse cx="828.1" cy="305.9" rx="8.9" ry="11.9" fill="#4800b8" transform="rotate(0 828.1 305.9)"/><line x1="828.4" y1="305.9" x2="836.1" y2="303.8" stroke="#ffee00" stroke-width="1.6"/><polygon points="830.4,266.5 862.1,238.9 862.5,240.1" fill="#00daaa" stroke="#00daaa" stroke-width="0.6"/><polygon points="830.4,266.5 862.5,240.1 863.5,243.6" fill="#00e0b0" stroke="#00e0b0" stroke-width="0.6"/><polygon points="830.4,266.5 863.5,243.6 865,248.8" fill="#00e4b4" stroke="#00e4b4" stroke-width="0.6"/><polygon points="830.4,266.5 865,248.8 866.8,254.9" fill="#00eaba" stroke="#00eaba" stroke-width="0.6"/><polygon points="830.4,266.5 866.8,254.9 868.6,261.1" fill="#00eebe" stroke="#00eebe" stroke-width="0.6"/><polygon points="830.4,266.5 868.6,261.1 870.1,266.3" fill="#00f2c2" stroke="#00f2c2" stroke-width="0.6"/><polygon points="830.4,266.5 870.1,266.3 871.1,269.8" fill="#00f4c4" stroke="#00f4c4" stroke-width="0.6"/><polygon points="830.4,266.5 871.1,269.8 871.5,271" fill="#00f7c7" stroke="#00f7c7" stroke-width="0.6"/><ellipse cx="866.8" cy="254.9" rx="16.7" ry="6.4" fill="#00b088" transform="rotate(73.7 866.8 254.9)"/><line x1="866.5" y1="254.8" x2="877.6" y2="250.7" stroke="#ffee00" stroke-width="1.6"/><polygon points="812.6,275.7 844.6,273.4 844.3,274.2" fill="#0c96e5" stroke="#0c96e5" stroke-width="0.6"/><polygon points="812.6,275.7 844.3,274.2 843.6,276.5" fill="#0f92df" stroke="#0f92df" stroke-width="0.6"/><polygon points="812.6,275.7 843.6,276.5 842.6,280" fill="#138ed9" stroke="#138ed9" stroke-width="0.6"/><polygon points="812.6,275.7 842.6,280 841.3,284.1" fill="#168ad3" stroke="#168ad3" stroke-width="0.6"/><polygon points="812.6,275.7 841.3,284.1 840,288.2" fill="#1689d2" stroke="#1689d2" stroke-width="0.6"/><polygon points="812.6,275.7 840,288.2 839,291.7" fill="#138bd6" stroke="#138bd6" stroke-width="0.6"/><polygon points="812.6,275.7 839,291.7 838.3,294" fill="#0f8dda" stroke="#0f8dda" stroke-width="0.6"/><polygon points="812.6,275.7 838.3,294 838,294.8" fill="#0c8fde" stroke="#0c8fde" stroke-width="0.6"/><ellipse cx="841.3" cy="284.1" rx="11.2" ry="1.3" fill="#0a78c8" transform="rotate(107.1 841.3 284.1)"/><line x1="841.9" y1="284" x2="849.9" y2="286.8" stroke="#ffee00" stroke-width="1.6"/><polygon points="694.9,324.6 719.8,315.1 719.7,315.9" fill="#00d91e" stroke="#00d91e" stroke-width="0.6"/><polygon points="694.9,324.6 719.7,315.9 719.4,318.1" fill="#00cb1a" stroke="#00cb1a" stroke-width="0.6"/><polygon points="694.9,324.6 719.4,318.1 719.1,321.5" fill="#00bd16" stroke="#00bd16" stroke-width="0.6"/><polygon points="694.9,324.6 719.1,321.5 718.6,325.4" fill="#00af12" stroke="#00af12" stroke-width="0.6"/><polygon points="694.9,324.6 718.6,325.4 718.1,329.3" fill="#02ae12" stroke="#02ae12" stroke-width="0.6"/><polygon points="694.9,324.6 718.1,329.3 717.8,332.7" fill="#06ba16" stroke="#06ba16" stroke-width="0.6"/><polygon points="694.9,324.6 717.8,332.7 717.5,334.9" fill="#0ac61a" stroke="#0ac61a" stroke-width="0.6"/><polygon points="694.9,324.6 717.5,334.9 717.4,335.7" fill="#0ed21e" stroke="#0ed21e" stroke-width="0.6"/><ellipse cx="718.6" cy="325.4" rx="10.4" ry="2.9" fill="#00b818" transform="rotate(96.6 718.6 325.4)"/><line x1="718.2" y1="325.7" x2="727" y2="325.7" stroke="#ffee00" stroke-width="1.6"/><polygon points="559.8,368.7 597.5,351.5 598.2,352.3" fill="#cc2e02" stroke="#cc2e02" stroke-width="0.6"/><polygon points="559.8,368.7 598.2,352.3 599.2,354.8" fill="#b32907" stroke="#b32907" stroke-width="0.6"/><polygon points="559.8,368.7 599.2,354.8 600.3,358.6" fill="#9b250b" stroke="#9b250b" stroke-width="0.6"/><polygon points="559.8,368.7 600.3,358.6 601.4,363.1" fill="#822010" stroke="#822010" stroke-width="0.6"/><polygon points="559.8,368.7 601.4,363.1 602.4,367.6" fill="#8f230d" stroke="#8f230d" stroke-width="0.6"/><polygon points="559.8,368.7 602.4,367.6 603,371.4" fill="#9f2709" stroke="#9f2709" stroke-width="0.6"/><polygon points="559.8,368.7 603,371.4 603.2,374" fill="#af2b05" stroke="#af2b05" stroke-width="0.6"/><polygon points="559.8,368.7 603.2,374 603,375" fill="#c02e02" stroke="#c02e02" stroke-width="0.6"/><line x1="559.5" y1="368.3" x2="560.5" y2="369" stroke="#ffee00" stroke-width="2"/><polygon points="571.5,377 615.6,355.1 615.8,356.3" fill="#c8a104" stroke="#c8a104" stroke-width="0.6"/><polygon points="571.5,377 615.8,356.3 616.5,359.6" fill="#b7930c" stroke="#b7930c" stroke-width="0.6"/><polygon points="571.5,377 616.5,359.6 617.5,364.5" fill="#a68515" stroke="#a68515" stroke-width="0.6"/><polygon points="571.5,377 617.5,364.5 618.7,370.4" fill="#96761d" stroke="#96761d" stroke-width="0.6"/><polygon points="571.5,377 618.7,370.4 619.8,376.3" fill="#856826" stroke="#856826" stroke-width="0.6"/><polygon points="571.5,377 619.8,376.3 620.8,381.2" fill="#90711f" stroke="#90711f" stroke-width="0.6"/><polygon points="571.5,377 620.8,381.2 621.5,384.5" fill="#a68413" stroke="#a68413" stroke-width="0.6"/><polygon points="571.5,377 621.5,384.5 621.7,385.7" fill="#bd9706" stroke="#bd9706" stroke-width="0.6"/><ellipse cx="618.7" cy="370.4" rx="15.6" ry="0.9" fill="#b89800" transform="rotate(78.7 618.7 370.4)"/><line x1="621.7" y1="369.8" x2="630.7" y2="369" stroke="#ffee00" stroke-width="1.6"/><line x1="571.2" y1="376.6" x2="572.2" y2="377.4" stroke="#ffee00" stroke-width="2"/><ellipse cx="649.7" cy="416.6" rx="12" ry="14.8" fill="#0a78e0" transform="rotate(0 649.7 416.6)"/><polygon points="637.8,422.2 652.5,403.5 655.5,404" fill="#4090dc"/><polygon points="637.8,422.2 655.5,404 659,407" fill="#90c0e8"/><polygon points="637.8,422.2 659,407 661.5,411" fill="#4898e0"/><polygon points="637.8,422.2 661.5,411 662,420 655,430" fill="#0a68c8"/><polygon points="616.4,447 639.4,422.9 639.8,423.8" fill="#0b8ad1" stroke="#0b8ad1" stroke-width="0.6"/><polygon points="616.4,447 639.8,423.8 640.8,426.3" fill="#0c8ed3" stroke="#0c8ed3" stroke-width="0.6"/><polygon points="616.4,447 640.8,426.3 642.3,430.2" fill="#0e92d5" stroke="#0e92d5" stroke-width="0.6"/><polygon points="616.4,447 642.3,430.2 644.1,434.6" fill="#0f96d7" stroke="#0f96d7" stroke-width="0.6"/><polygon points="616.4,447 644.1,434.6 646,439.1" fill="#0f97d8" stroke="#0f97d8" stroke-width="0.6"/><polygon points="616.4,447 646,439.1 647.5,443" fill="#0e95d8" stroke="#0e95d8" stroke-width="0.6"/><polygon points="616.4,447 647.5,443 648.5,445.5" fill="#0c93d8" stroke="#0c93d8" stroke-width="0.6"/><polygon points="616.4,447 648.5,445.5 648.9,446.4" fill="#0b91d8" stroke="#0b91d8" stroke-width="0.6"/><ellipse cx="644.1" cy="434.6" rx="12.7" ry="7.9" fill="#10b0f0" transform="rotate(68 644.1 434.6)"/><line x1="644.2" y1="434" x2="651.8" y2="430.9" stroke="#ffee00" stroke-width="1.6"/><line x1="616.1" y1="446.6" x2="617" y2="447.4" stroke="#ffee00" stroke-width="2"/><polygon points="561.6,461.5 555,482.6 568,481" fill="#5800e0"/><polygon points="582.7,454.9 589.9,464.9 588.8,471.5 580.5,476.5 572,470" fill="#5800e0"/><polygon points="560,461 586,458.8 586.6,460.5" fill="#00be81" stroke="#00be81" stroke-width="0.6"/><polygon points="560,461 586.6,460.5 585.8,463.9" fill="#00aa73" stroke="#00aa73" stroke-width="0.6"/><polygon points="560,461 585.8,463.9 583.7,468.5" fill="#009665" stroke="#009665" stroke-width="0.6"/><polygon points="560,461 583.7,468.5 580.7,473.5" fill="#008257" stroke="#008257" stroke-width="0.6"/><polygon points="560,461 580.7,473.5 577.1,478.3" fill="#028459" stroke="#028459" stroke-width="0.6"/><polygon points="560,461 577.1,478.3 573.6,482" fill="#069c6b" stroke="#069c6b" stroke-width="0.6"/><polygon points="560,461 573.6,482 570.7,484.1" fill="#0ab47d" stroke="#0ab47d" stroke-width="0.6"/><polygon points="560,461 570.7,484.1 568.8,484.3" fill="#0ecc8f" stroke="#0ecc8f" stroke-width="0.6"/><ellipse cx="570.9" cy="449.6" rx="12" ry="12" fill="#109878" transform="rotate(0 570.9 449.6)"/><line x1="570.2" y1="449.2" x2="571.8" y2="449.2" stroke="#ffee00" stroke-width="1.8"/><line x1="559.5" y1="461" x2="561" y2="460.4" stroke="#ffee00" stroke-width="2"/><line x1="581" y1="457.5" x2="583" y2="456" stroke="#ffee00" stroke-width="2"/><polygon points="687.5,434 699,452.5 706,434" fill="#f04000"/><ellipse cx="696" cy="428.6" rx="10.6" ry="10.7" fill="#c03800" transform="rotate(0 696 428.6)"/><line x1="699.9" y1="421" x2="699.9" y2="428.8" stroke="#ffee00" stroke-width="1.8"/><polygon points="679.1,461 668.8,474.5 698.1,471.3 695.7,461" fill="#0010f0"/><polygon points="658.1,432.5 696.5,442.8 695.9,443.6" fill="#c6be00" stroke="#c6be00" stroke-width="0.6"/><polygon points="658.1,432.5 695.9,443.6 694.2,445.8" fill="#d2ca00" stroke="#d2ca00" stroke-width="0.6"/><polygon points="658.1,432.5 694.2,445.8 691.6,449.2" fill="#ded600" stroke="#ded600" stroke-width="0.6"/><polygon points="658.1,432.5 691.6,449.2 688.6,453.1" fill="#eae200" stroke="#eae200" stroke-width="0.6"/><polygon points="658.1,432.5 688.6,453.1 685.6,457" fill="#efe700" stroke="#efe700" stroke-width="0.6"/><polygon points="658.1,432.5 685.6,457 683,460.4" fill="#ede500" stroke="#ede500" stroke-width="0.6"/><polygon points="658.1,432.5 683,460.4 681.3,462.6" fill="#ebe300" stroke="#ebe300" stroke-width="0.6"/><polygon points="658.1,432.5 681.3,462.6 680.7,463.4" fill="#e9e100" stroke="#e9e100" stroke-width="0.6"/><ellipse cx="688.6" cy="453.1" rx="13" ry="9.1" fill="#d8d000" transform="rotate(127.5 688.6 453.1)"/><line x1="689.4" y1="453.9" x2="697.3" y2="458.6" stroke="#ffee00" stroke-width="1.6"/><ellipse cx="652.9" cy="466.6" rx="15.4" ry="15.4" fill="#4050a8" transform="rotate(0 652.9 466.6)"/><line x1="652.1" y1="466.9" x2="653.9" y2="466.9" stroke="#ffee00" stroke-width="1.8"/><polygon points="606.4,468.6 631.5,462.3 631.4,463.5" fill="#d88300" stroke="#d88300" stroke-width="0.6"/><polygon points="606.4,468.6 631.4,463.5 630.5,466.7" fill="#c87900" stroke="#c87900" stroke-width="0.6"/><polygon points="606.4,468.6 630.5,466.7 629,471.4" fill="#b86f00" stroke="#b86f00" stroke-width="0.6"/><polygon points="606.4,468.6 629,471.4 627.1,476.8" fill="#a86500" stroke="#a86500" stroke-width="0.6"/><polygon points="606.4,468.6 627.1,476.8 625,482.3" fill="#a76400" stroke="#a76400" stroke-width="0.6"/><polygon points="606.4,468.6 625,482.3 623.2,486.8" fill="#b56c00" stroke="#b56c00" stroke-width="0.6"/><polygon points="606.4,468.6 623.2,486.8 621.9,489.8" fill="#c37400" stroke="#c37400" stroke-width="0.6"/><polygon points="606.4,468.6 621.9,489.8 621.2,490.8" fill="#d17c00" stroke="#d17c00" stroke-width="0.6"/><line x1="606.1" y1="468.2" x2="607" y2="469" stroke="#ffee00" stroke-width="2"/><ellipse cx="831" cy="340" rx="13.5" ry="9.5" fill="#40e000" transform="rotate(0 831 340)"/><polygon points="836.5,336 818.3,336.8 819.6,334.9 821.5,333.3 823.7,332 826.4,331.1 829.2,330.6 832.2,330.5 835.1,330.9 837.8,331.8" fill="#38b800"/><polygon points="791.2,338.9 853.8,347.1 853.1,347.9" fill="#0874a4" stroke="#0874a4" stroke-width="0.6"/><polygon points="791.2,338.9 853.1,347.9 850.4,349.8" fill="#0a7cac" stroke="#0a7cac" stroke-width="0.6"/><polygon points="791.2,338.9 850.4,349.8 846.2,352.7" fill="#0a84b4" stroke="#0a84b4" stroke-width="0.6"/><polygon points="791.2,338.9 846.2,352.7 841.1,356.1" fill="#0c8cbc" stroke="#0c8cbc" stroke-width="0.6"/><polygon points="791.2,338.9 841.1,356.1 835.9,359.4" fill="#0e98c8" stroke="#0e98c8" stroke-width="0.6"/><polygon points="791.2,338.9 835.9,359.4 831.4,362.1" fill="#14a8d8" stroke="#14a8d8" stroke-width="0.6"/><polygon points="791.2,338.9 831.4,362.1 828.2,363.9" fill="#18b8e7" stroke="#18b8e7" stroke-width="0.6"/><polygon points="791.2,338.9 828.2,363.9 826.9,364.5" fill="#1ec8f7" stroke="#1ec8f7" stroke-width="0.6"/><line x1="791" y1="338.6" x2="792" y2="339.4" stroke="#ffee00" stroke-width="2"/><polygon points="706.3,361.4 750.7,367.4 750.9,368" fill="#1800e0" stroke="#1800e0" stroke-width="0.6"/><polygon points="706.3,361.4 750.9,368 750.6,369.4" fill="#1800e0" stroke="#1800e0" stroke-width="0.6"/><polygon points="706.3,361.4 750.6,369.4 749.9,371.4" fill="#1902e0" stroke="#1902e0" stroke-width="0.6"/><polygon points="706.3,361.4 749.9,371.4 748.8,374" fill="#1d06df" stroke="#1d06df" stroke-width="0.6"/><polygon points="706.3,361.4 748.8,374 747.5,377" fill="#2710de" stroke="#2710de" stroke-width="0.6"/><polygon points="706.3,361.4 747.5,377 745.9,380.1" fill="#3923dc" stroke="#3923dc" stroke-width="0.6"/><polygon points="706.3,361.4 745.9,380.1 744.2,383.2" fill="#5845d8" stroke="#5845d8" stroke-width="0.6"/><polygon points="706.3,361.4 744.2,383.2 742.5,386.1" fill="#6050d9" stroke="#6050d9" stroke-width="0.6"/><polygon points="706.3,361.4 742.5,386.1 741,388.5" fill="#2d1de2" stroke="#2d1de2" stroke-width="0.6"/><polygon points="706.3,361.4 741,388.5 739.7,390.2" fill="#1808e7" stroke="#1808e7" stroke-width="0.6"/><polygon points="706.3,361.4 739.7,390.2 738.7,391.3" fill="#1101e8" stroke="#1101e8" stroke-width="0.6"/><polygon points="706.3,361.4 738.7,391.3 738.1,391.5" fill="#1000e8" stroke="#1000e8" stroke-width="0.6"/><line x1="747.3" y1="380.9" x2="753.9" y2="384.1" stroke="#ffee00" stroke-width="1.6"/><line x1="751.3" y1="366.6" x2="752.6" y2="368.6" stroke="#ffee00" stroke-width="1.6"/><line x1="706" y1="361" x2="707" y2="361.8" stroke="#ffee00" stroke-width="2"/><polygon points="722.4,338.3 756.9,353.5 757.1,355.1" fill="#4616d8" stroke="#4616d8" stroke-width="0.6"/><polygon points="722.4,338.3 757.1,355.1 755.8,357.7" fill="#4111c9" stroke="#4111c9" stroke-width="0.6"/><polygon points="722.4,338.3 755.8,357.7 753.2,361.2" fill="#3d0db9" stroke="#3d0db9" stroke-width="0.6"/><polygon points="722.4,338.3 753.2,361.2 749.8,364.8" fill="#3808aa" stroke="#3808aa" stroke-width="0.6"/><polygon points="722.4,338.3 749.8,364.8 746,368" fill="#3c06b5" stroke="#3c06b5" stroke-width="0.6"/><polygon points="722.4,338.3 746,368 742.4,370.5" fill="#4105c4" stroke="#4105c4" stroke-width="0.6"/><polygon points="722.4,338.3 742.4,370.5 739.6,371.7" fill="#4503d2" stroke="#4503d2" stroke-width="0.6"/><polygon points="722.4,338.3 739.6,371.7 738,371.5" fill="#4a01e1" stroke="#4a01e1" stroke-width="0.6"/><polygon points="794.4,370.9 825.3,368.2 825.1,368.9" fill="#d32e00" stroke="#d32e00" stroke-width="0.6"/><polygon points="794.4,370.9 825.1,368.9 824.6,370.8" fill="#c92a00" stroke="#c92a00" stroke-width="0.6"/><polygon points="794.4,370.9 824.6,370.8 823.8,373.7" fill="#bf2600" stroke="#bf2600" stroke-width="0.6"/><polygon points="794.4,370.9 823.8,373.7 822.9,377.1" fill="#b52200" stroke="#b52200" stroke-width="0.6"/><polygon points="794.4,370.9 822.9,377.1 822,380.5" fill="#b32100" stroke="#b32100" stroke-width="0.6"/><polygon points="794.4,370.9 822,380.5 821.2,383.4" fill="#b92300" stroke="#b92300" stroke-width="0.6"/><polygon points="794.4,370.9 821.2,383.4 820.7,385.3" fill="#bf2500" stroke="#bf2500" stroke-width="0.6"/><polygon points="794.4,370.9 820.7,385.3 820.5,386" fill="#c52700" stroke="#c52700" stroke-width="0.6"/><polygon points="835,378 838,378 838,385 835,384" fill="#c02000"/><line x1="794.1" y1="370.5" x2="795.4" y2="371.3" stroke="#ffee00" stroke-width="2"/><polygon points="823.4,373.8 818.1,397.6 819.3,398.4" fill="#e4cb00" stroke="#e4cb00" stroke-width="0.6"/><polygon points="823.4,373.8 819.3,398.4 822.2,398.7" fill="#ddc200" stroke="#ddc200" stroke-width="0.6"/><polygon points="823.4,373.8 822.2,398.7 826.4,398.6" fill="#d6b900" stroke="#d6b900" stroke-width="0.6"/><polygon points="823.4,373.8 826.4,398.6 831.2,398" fill="#cfb000" stroke="#cfb000" stroke-width="0.6"/><polygon points="823.4,373.8 831.2,398 835.8,397" fill="#c9a900" stroke="#c9a900" stroke-width="0.6"/><polygon points="823.4,373.8 835.8,397 839.6,395.9" fill="#cfaf00" stroke="#cfaf00" stroke-width="0.6"/><polygon points="823.4,373.8 839.6,395.9 842.1,394.7" fill="#d6b600" stroke="#d6b600" stroke-width="0.6"/><polygon points="823.4,373.8 842.1,394.7 842.7,393.6" fill="#ddbd00" stroke="#ddbd00" stroke-width="0.6"/><line x1="839.2" y1="379.3" x2="840.3" y2="389.6" stroke="#ffee00" stroke-width="1.6"/><line x1="830.8" y1="397.3" x2="832.4" y2="403.9" stroke="#ffee00" stroke-width="1.6"/><polygon points="836.7,336 823.7,376.2 825,376.8" fill="#0f6be3" stroke="#0f6be3" stroke-width="0.6"/><polygon points="836.7,336 825,376.8 828.6,377.2" fill="#0d61d9" stroke="#0d61d9" stroke-width="0.6"/><polygon points="836.7,336 828.6,377.2 834,377.5" fill="#0b57cf" stroke="#0b57cf" stroke-width="0.6"/><polygon points="836.7,336 834,377.5 840.3,377.4" fill="#094dc5" stroke="#094dc5" stroke-width="0.6"/><polygon points="836.7,336 840.3,377.4 846.6,377.2" fill="#084bc4" stroke="#084bc4" stroke-width="0.6"/><polygon points="836.7,336 846.6,377.2 852,376.7" fill="#0951cc" stroke="#0951cc" stroke-width="0.6"/><polygon points="836.7,336 852,376.7 855.5,376.1" fill="#0957d4" stroke="#0957d4" stroke-width="0.6"/><polygon points="836.7,336 855.5,376.1 856.7,375.4" fill="#0a5ddc" stroke="#0a5ddc" stroke-width="0.6"/><line x1="851.4" y1="364.6" x2="862.5" y2="369.3" stroke="#ffee00" stroke-width="1.6"/><line x1="836.3" y1="335.2" x2="837.3" y2="336.4" stroke="#ffee00" stroke-width="2"/><polygon points="798.6,404.2 849.9,404.2 849.6,405.3" fill="#13aa8a" stroke="#13aa8a" stroke-width="0.6"/><polygon points="798.6,404.2 849.6,405.3 848.5,408.5" fill="#1eb393" stroke="#1eb393" stroke-width="0.6"/><polygon points="798.6,404.2 848.5,408.5 846.9,413.1" fill="#2fc0a0" stroke="#2fc0a0" stroke-width="0.6"/><polygon points="798.6,404.2 846.9,413.1 844.8,418.6" fill="#43d0b0" stroke="#43d0b0" stroke-width="0.6"/><polygon points="798.6,404.2 844.8,418.6 842.8,424.1" fill="#54e0bf" stroke="#54e0bf" stroke-width="0.6"/><polygon points="798.6,404.2 842.8,424.1 841,428.7" fill="#33e3b9" stroke="#33e3b9" stroke-width="0.6"/><polygon points="798.6,404.2 841,428.7 839.7,431.7" fill="#18e6b4" stroke="#18e6b4" stroke-width="0.6"/><polygon points="798.6,404.2 839.7,431.7 839.2,432.8" fill="#05e8b1" stroke="#05e8b1" stroke-width="0.6"/><line x1="845.1" y1="419" x2="858.6" y2="423.3" stroke="#ffee00" stroke-width="1.6"/><line x1="798.3" y1="403.8" x2="799.3" y2="404.6" stroke="#ffee00" stroke-width="2"/><polygon points="804.7,387.7 818.9,391.5 818.5,392.2" fill="#d67600" stroke="#d67600" stroke-width="0.6"/><polygon points="804.7,387.7 818.5,392.2 817.3,394.1" fill="#d27200" stroke="#d27200" stroke-width="0.6"/><polygon points="804.7,387.7 817.3,394.1 815.5,396.9" fill="#ce6e00" stroke="#ce6e00" stroke-width="0.6"/><polygon points="804.7,387.7 815.5,396.9 813.3,400.2" fill="#ca6a00" stroke="#ca6a00" stroke-width="0.6"/><polygon points="804.7,387.7 813.3,400.2 811.2,403.6" fill="#ca6a00" stroke="#ca6a00" stroke-width="0.6"/><polygon points="804.7,387.7 811.2,403.6 809.4,406.4" fill="#ce6e00" stroke="#ce6e00" stroke-width="0.6"/><polygon points="804.7,387.7 809.4,406.4 808.2,408.3" fill="#d27200" stroke="#d27200" stroke-width="0.6"/><polygon points="804.7,387.7 808.2,408.3 807.8,409" fill="#d67600" stroke="#d67600" stroke-width="0.6"/><polygon points="732.6,409.6 745.5,417.1 731,438 723,446.8 712,442 711,428 720,416" fill="#f08800"/><polygon points="694.9,384.6 706.3,421 707.3,420.5" fill="#ef3e00" stroke="#ef3e00" stroke-width="0.6"/><polygon points="694.9,384.6 707.3,420.5 710,419" fill="#ed3a00" stroke="#ed3a00" stroke-width="0.6"/><polygon points="694.9,384.6 710,419 714.1,416.7" fill="#eb3600" stroke="#eb3600" stroke-width="0.6"/><polygon points="694.9,384.6 714.1,416.7 719,414.1" fill="#e93200" stroke="#e93200" stroke-width="0.6"/><polygon points="694.9,384.6 719,414.1 723.9,411.4" fill="#e93200" stroke="#e93200" stroke-width="0.6"/><polygon points="694.9,384.6 723.9,411.4 728,409.1" fill="#eb3600" stroke="#eb3600" stroke-width="0.6"/><polygon points="694.9,384.6 728,409.1 730.7,407.6" fill="#ed3a00" stroke="#ed3a00" stroke-width="0.6"/><polygon points="694.9,384.6 730.7,407.6 731.7,407.1" fill="#ef3e00" stroke="#ef3e00" stroke-width="0.6"/><ellipse cx="719" cy="414.1" rx="14.5" ry="10.4" fill="#cc2800" transform="rotate(-28.7 719 414.1)"/><line x1="719.6" y1="415.2" x2="726.5" y2="423.8" stroke="#ffee00" stroke-width="1.6"/><line x1="694.6" y1="384.2" x2="695.6" y2="385" stroke="#ffee00" stroke-width="2"/><ellipse cx="736.8" cy="426.9" rx="13.2" ry="10.9" fill="#a86800" transform="rotate(0 736.8 426.9)"/><line x1="736.8" y1="427.4" x2="736.8" y2="431.7" stroke="#ffee00" stroke-width="1.8"/><polygon points="707.8,423.2 694.5,465.6 695.8,466.2" fill="#96c404" stroke="#96c404" stroke-width="0.6"/><polygon points="707.8,423.2 695.8,466.2 699.3,466.8" fill="#90ba0a" stroke="#90ba0a" stroke-width="0.6"/><polygon points="707.8,423.2 699.3,466.8 704.6,467.2" fill="#8cb212" stroke="#8cb212" stroke-width="0.6"/><polygon points="707.8,423.2 704.6,467.2 710.9,467.4" fill="#86a818" stroke="#86a818" stroke-width="0.6"/><polygon points="707.8,423.2 710.9,467.4 717.1,467.4" fill="#86a618" stroke="#86a618" stroke-width="0.6"/><polygon points="707.8,423.2 717.1,467.4 722.3,467.1" fill="#88ac12" stroke="#88ac12" stroke-width="0.6"/><polygon points="707.8,423.2 722.3,467.1 725.8,466.6" fill="#8cb00a" stroke="#8cb00a" stroke-width="0.6"/><polygon points="707.8,423.2 725.8,466.6 727,466" fill="#8eb604" stroke="#8eb604" stroke-width="0.6"/><line x1="710.8" y1="471.3" x2="710.8" y2="478.8" stroke="#ffee00" stroke-width="1.6"/><ellipse cx="790.5" cy="421" rx="19" ry="9" fill="#00d800" transform="rotate(0 790.5 421)"/><polygon points="783.3,391.5 777.7,413.4 778.5,413.3" fill="#24ba24" stroke="#24ba24" stroke-width="0.6"/><polygon points="783.3,391.5 778.5,413.3 780.8,413.2" fill="#2cae2c" stroke="#2cae2c" stroke-width="0.6"/><polygon points="783.3,391.5 780.8,413.2 784.3,412.9" fill="#34a234" stroke="#34a234" stroke-width="0.6"/><polygon points="783.3,391.5 784.3,412.9 788.4,412.6" fill="#3c963c" stroke="#3c963c" stroke-width="0.6"/><polygon points="783.3,391.5 788.4,412.6 792.5,412.3" fill="#389838" stroke="#389838" stroke-width="0.6"/><polygon points="783.3,391.5 792.5,412.3 796,412" fill="#28a828" stroke="#28a828" stroke-width="0.6"/><polygon points="783.3,391.5 796,412 798.3,411.9" fill="#18b818" stroke="#18b818" stroke-width="0.6"/><polygon points="783.3,391.5 798.3,411.9 799.1,411.8" fill="#08c808" stroke="#08c808" stroke-width="0.6"/><line x1="783" y1="391" x2="784" y2="392" stroke="#ffee00" stroke-width="2"/><line x1="771.5" y1="413.5" x2="772.5" y2="414.5" stroke="#ffee00" stroke-width="2"/><polygon points="770,430 798.3,412.6 801,413.7" fill="#d8a801" stroke="#d8a801" stroke-width="0.6"/><polygon points="770,430 801,413.7 803.6,417.1" fill="#d7a909" stroke="#d7a909" stroke-width="0.6"/><polygon points="770,430 803.6,417.1 805.6,422.3" fill="#d4ac20" stroke="#d4ac20" stroke-width="0.6"/><polygon points="770,430 805.6,422.3 806.7,428.4" fill="#cfb14a" stroke="#cfb14a" stroke-width="0.6"/><polygon points="770,430 806.7,428.4 806.8,434.6" fill="#c8aa4a" stroke="#c8aa4a" stroke-width="0.6"/><polygon points="770,430 806.8,434.6 805.8,439.9" fill="#c39b20" stroke="#c39b20" stroke-width="0.6"/><polygon points="770,430 805.8,439.9 804,443.5" fill="#c19309" stroke="#c19309" stroke-width="0.6"/><polygon points="770,430 804,443.5 801.5,444.8" fill="#c09001" stroke="#c09001" stroke-width="0.6"/><polygon points="791.2,443.6 796.7,444.4 794.4,449.9" fill="#0a90f0"/><polygon points="754.7,437.5 782.5,417.4 783.5,418.6" fill="#de9802" stroke="#de9802" stroke-width="0.6"/><polygon points="754.7,437.5 783.5,418.6 784.9,422.1" fill="#c98806" stroke="#c98806" stroke-width="0.6"/><polygon points="754.7,437.5 784.9,422.1 786.3,427.5" fill="#b4780a" stroke="#b4780a" stroke-width="0.6"/><polygon points="754.7,437.5 786.3,427.5 787.7,433.8" fill="#9f680e" stroke="#9f680e" stroke-width="0.6"/><polygon points="754.7,437.5 787.7,433.8 788.7,440.2" fill="#9d660e" stroke="#9d660e" stroke-width="0.6"/><polygon points="754.7,437.5 788.7,440.2 789.3,445.7" fill="#ae720a" stroke="#ae720a" stroke-width="0.6"/><polygon points="754.7,437.5 789.3,445.7 789.3,449.3" fill="#bf7e06" stroke="#bf7e06" stroke-width="0.6"/><polygon points="754.7,437.5 789.3,449.3 788.8,450.7" fill="#d08a02" stroke="#d08a02" stroke-width="0.6"/><line x1="774" y1="432.8" x2="779" y2="431" stroke="#d8c040" stroke-width="1.4"/><line x1="754.3" y1="437.2" x2="755.3" y2="437.8" stroke="#ffee00" stroke-width="2"/><polygon points="751.1,440.7 770.6,444.8 757.1,461" fill="#00f020"/><polygon points="751.1,440.7 761,443 757.1,461" fill="#00d818"/><line x1="764.7" y1="451.5" x2="767.9" y2="454.7" stroke="#ffee00" stroke-width="1.6"/><polygon points="791.7,461.8 820.5,431.5 822.7,431.1" fill="#e53d02" stroke="#e53d02" stroke-width="0.6"/><polygon points="791.7,461.8 822.7,431.1 825.7,431.8" fill="#cf3805" stroke="#cf3805" stroke-width="0.6"/><polygon points="791.7,461.8 825.7,431.8 829.2,433.6" fill="#b93209" stroke="#b93209" stroke-width="0.6"/><polygon points="791.7,461.8 829.2,433.6 832.6,436.2" fill="#a42d0d" stroke="#a42d0d" stroke-width="0.6"/><polygon points="791.7,461.8 832.6,436.2 835.3,439.1" fill="#922810" stroke="#922810" stroke-width="0.6"/><polygon points="791.7,461.8 835.3,439.1 837,442.1" fill="#a12a0b" stroke="#a12a0b" stroke-width="0.6"/><polygon points="791.7,461.8 837,442.1 837.4,444.5" fill="#b12d07" stroke="#b12d07" stroke-width="0.6"/><polygon points="791.7,461.8 837.4,444.5 836.4,446" fill="#c02f02" stroke="#c02f02" stroke-width="0.6"/><line x1="833.5" y1="436.9" x2="838.8" y2="434" stroke="#ffee00" stroke-width="1.6"/><line x1="791.4" y1="461.4" x2="792.4" y2="462.2" stroke="#ffee00" stroke-width="2"/><polygon points="790.7,478.8 825.3,443.6 825.8,445" fill="#0a66ee" stroke="#0a66ee" stroke-width="0.6"/><polygon points="790.7,478.8 825.8,445 827.4,449" fill="#0a62ea" stroke="#0a62ea" stroke-width="0.6"/><polygon points="790.7,478.8 827.4,449 829.7,455" fill="#0a5ee6" stroke="#0a5ee6" stroke-width="0.6"/><polygon points="790.7,478.8 829.7,455 832.4,462" fill="#0a5ae2" stroke="#0a5ae2" stroke-width="0.6"/><polygon points="790.7,478.8 832.4,462 835.1,469" fill="#0a5ae2" stroke="#0a5ae2" stroke-width="0.6"/><polygon points="790.7,478.8 835.1,469 837.4,475" fill="#0a5ee6" stroke="#0a5ee6" stroke-width="0.6"/><polygon points="790.7,478.8 837.4,475 839,479" fill="#0a62ea" stroke="#0a62ea" stroke-width="0.6"/><polygon points="790.7,478.8 839,479 839.5,480.4" fill="#0a66ee" stroke="#0a66ee" stroke-width="0.6"/><ellipse cx="832.4" cy="462" rx="19.7" ry="12.8" fill="#0848c8" transform="rotate(68.9 832.4 462)"/><line x1="831.3" y1="462.3" x2="844" y2="456.6" stroke="#ffee00" stroke-width="1.6"/><polygon points="744.4,475.3 768.2,463.4 768.2,464.4" fill="#12e38e" stroke="#12e38e" stroke-width="0.6"/><polygon points="744.4,475.3 768.2,464.4 768.2,467.1" fill="#16d98a" stroke="#16d98a" stroke-width="0.6"/><polygon points="744.4,475.3 768.2,467.1 768.3,471.2" fill="#1acf86" stroke="#1acf86" stroke-width="0.6"/><polygon points="744.4,475.3 768.3,471.2 768.4,476.1" fill="#1ec582" stroke="#1ec582" stroke-width="0.6"/><polygon points="744.4,475.3 768.4,476.1 768.4,481" fill="#1cc27e" stroke="#1cc27e" stroke-width="0.6"/><polygon points="744.4,475.3 768.4,481 768.5,485.1" fill="#14c67a" stroke="#14c67a" stroke-width="0.6"/><polygon points="744.4,475.3 768.5,485.1 768.5,487.8" fill="#0cca76" stroke="#0cca76" stroke-width="0.6"/><polygon points="744.4,475.3 768.5,487.8 768.5,488.8" fill="#04ce72" stroke="#04ce72" stroke-width="0.6"/><ellipse cx="768.4" cy="476.1" rx="12.7" ry="0.6" fill="#10a868" transform="rotate(89.3 768.4 476.1)"/><line x1="768.5" y1="476.1" x2="775.8" y2="476.1" stroke="#ffee00" stroke-width="1.6"/><line x1="742.8" y1="468.1" x2="742.8" y2="476.1" stroke="#ffee00" stroke-width="1.6"/><polygon points="655.3,502.8 668.8,479 669,479.3" fill="#d0a800" stroke="#d0a800" stroke-width="0.6"/><polygon points="655.3,502.8 669,479.3 669.5,480.2" fill="#d0a801" stroke="#d0a801" stroke-width="0.6"/><polygon points="655.3,502.8 669.5,480.2 670.4,481.7" fill="#d0a906" stroke="#d0a906" stroke-width="0.6"/><polygon points="655.3,502.8 670.4,481.7 671.6,483.6" fill="#cfaa11" stroke="#cfaa11" stroke-width="0.6"/><polygon points="655.3,502.8 671.6,483.6 672.9,485.8" fill="#cfad23" stroke="#cfad23" stroke-width="0.6"/><polygon points="655.3,502.8 672.9,485.8 674.3,488.1" fill="#ceb141" stroke="#ceb141" stroke-width="0.6"/><polygon points="655.3,502.8 674.3,488.1 675.8,490.5" fill="#ccb76b" stroke="#ccb76b" stroke-width="0.6"/><polygon points="655.3,502.8 675.8,490.5 677.1,492.7" fill="#c7a741" stroke="#c7a741" stroke-width="0.6"/><polygon points="655.3,502.8 677.1,492.7 678.3,494.6" fill="#c39b1e" stroke="#c39b1e" stroke-width="0.6"/><polygon points="655.3,502.8 678.3,494.6 679.2,496.1" fill="#c1940b" stroke="#c1940b" stroke-width="0.6"/><polygon points="655.3,502.8 679.2,496.1 679.7,497" fill="#c09102" stroke="#c09102" stroke-width="0.6"/><polygon points="655.3,502.8 679.7,497 679.9,497.3" fill="#c09000" stroke="#c09000" stroke-width="0.6"/><line x1="675.1" y1="487.8" x2="681.9" y2="483.5" stroke="#ffee00" stroke-width="1.6"/><polygon points="686.2,475.9 678.3,507.6 679.2,507.1" fill="#05e200" stroke="#05e200" stroke-width="0.6"/><polygon points="686.2,475.9 679.2,507.1 681.8,505.5" fill="#0fe800" stroke="#0fe800" stroke-width="0.6"/><polygon points="686.2,475.9 681.8,505.5 685.6,503.2" fill="#19ec00" stroke="#19ec00" stroke-width="0.6"/><polygon points="686.2,475.9 685.6,503.2 690.2,500.5" fill="#1eec00" stroke="#1eec00" stroke-width="0.6"/><polygon points="686.2,475.9 690.2,500.5 694.8,497.7" fill="#17e100" stroke="#17e100" stroke-width="0.6"/><polygon points="686.2,475.9 694.8,497.7 698.6,495.4" fill="#11d500" stroke="#11d500" stroke-width="0.6"/><polygon points="686.2,475.9 698.6,495.4 701.2,493.8" fill="#0aca00" stroke="#0aca00" stroke-width="0.6"/><polygon points="686.2,475.9 701.2,493.8 702.1,493.3" fill="#03be00" stroke="#03be00" stroke-width="0.6"/><line x1="685.9" y1="475.3" x2="686.7" y2="476.5" stroke="#ffee00" stroke-width="2"/><ellipse cx="613" cy="499.6" rx="13" ry="15.8" fill="#1890b8" transform="rotate(0 613 499.6)"/><line x1="614.8" y1="500" x2="616.4" y2="500" stroke="#ffee00" stroke-width="1.8"/><polygon points="624.4,496.8 611.7,518.7 612.5,518.7" fill="#0b73cb" stroke="#0b73cb" stroke-width="0.6"/><polygon points="624.4,496.8 612.5,518.7 615,518.7" fill="#0c7ad2" stroke="#0c7ad2" stroke-width="0.6"/><polygon points="624.4,496.8 615,518.7 618.6,518.7" fill="#0d81d9" stroke="#0d81d9" stroke-width="0.6"/><polygon points="624.4,496.8 618.6,518.7 622.8,518.7" fill="#0e87df" stroke="#0e87df" stroke-width="0.6"/><polygon points="624.4,496.8 622.8,518.7 627,518.7" fill="#108ee6" stroke="#108ee6" stroke-width="0.6"/><polygon points="624.4,496.8 627,518.7 630.6,518.7" fill="#0f8ce4" stroke="#0f8ce4" stroke-width="0.6"/><polygon points="624.4,496.8 630.6,518.7 633.1,518.7" fill="#0d88e0" stroke="#0d88e0" stroke-width="0.6"/><polygon points="624.4,496.8 633.1,518.7 633.9,518.7" fill="#0b82da" stroke="#0b82da" stroke-width="0.6"/><line x1="628" y1="519.5" x2="628" y2="531.4" stroke="#ffee00" stroke-width="1.6"/><polygon points="629.9,465.5 623.6,498.9 624.8,498.8" fill="#0f75ee" stroke="#0f75ee" stroke-width="0.6"/><polygon points="629.9,465.5 624.8,498.8 628.4,498.4" fill="#0e6fea" stroke="#0e6fea" stroke-width="0.6"/><polygon points="629.9,465.5 628.4,498.4 633.6,497.9" fill="#0c69e6" stroke="#0c69e6" stroke-width="0.6"/><polygon points="629.9,465.5 633.6,497.9 639.9,497.3" fill="#0b63e2" stroke="#0b63e2" stroke-width="0.6"/><polygon points="629.9,465.5 639.9,497.3 646.1,496.7" fill="#0a61e1" stroke="#0a61e1" stroke-width="0.6"/><polygon points="629.9,465.5 646.1,496.7 651.3,496.2" fill="#0a63e3" stroke="#0a63e3" stroke-width="0.6"/><polygon points="629.9,465.5 651.3,496.2 654.9,495.8" fill="#0a65e5" stroke="#0a65e5" stroke-width="0.6"/><polygon points="629.9,465.5 654.9,495.8 656.1,495.7" fill="#0a67e7" stroke="#0a67e7" stroke-width="0.6"/><ellipse cx="639.9" cy="497.3" rx="16.3" ry="9.8" fill="#0a62e2" transform="rotate(-5.6 639.9 497.3)"/><line x1="638.6" y1="491.4" x2="641.3" y2="498.5" stroke="#ffee00" stroke-width="1.6"/><polygon points="654,565.9 651,533 653,528.2" fill="#e07400" stroke="#e07400" stroke-width="0.6"/><polygon points="654,565.9 653,528.2 656.5,523.7" fill="#d16b00" stroke="#d16b00" stroke-width="0.6"/><polygon points="654,565.9 656.5,523.7 660.9,520" fill="#c16200" stroke="#c16200" stroke-width="0.6"/><polygon points="654,565.9 660.9,520 665.6,517.9" fill="#b65b00" stroke="#b65b00" stroke-width="0.6"/><polygon points="654,565.9 665.6,517.9 669.9,517.6" fill="#c36300" stroke="#c36300" stroke-width="0.6"/><polygon points="654,565.9 669.9,517.6 673.1,519.1" fill="#d06c00" stroke="#d06c00" stroke-width="0.6"/><polygon points="654,565.9 673.1,519.1 674.7,522.2" fill="#dd7400" stroke="#dd7400" stroke-width="0.6"/><polygon points="654,565.9 674.7,522.2 674.5,526.5" fill="#ea7c00" stroke="#ea7c00" stroke-width="0.6"/><line x1="666.1" y1="514.2" x2="666.1" y2="517.1" stroke="#ffee00" stroke-width="1.6"/><line x1="653.7" y1="565.3" x2="654.5" y2="566.5" stroke="#ffee00" stroke-width="2"/><polygon points="624.4,496.8 657.8,510.5 658.7,512.8" fill="#cad900" stroke="#cad900" stroke-width="0.6"/><polygon points="624.4,496.8 658.7,512.8 658.2,516.4" fill="#becc00" stroke="#becc00" stroke-width="0.6"/><polygon points="624.4,496.8 658.2,516.4 656.4,520.6" fill="#b1bf00" stroke="#b1bf00" stroke-width="0.6"/><polygon points="624.4,496.8 656.4,520.6 653.5,524.9" fill="#a5b200" stroke="#a5b200" stroke-width="0.6"/><polygon points="624.4,496.8 653.5,524.9 649.9,528.6" fill="#99a500" stroke="#99a500" stroke-width="0.6"/><polygon points="624.4,496.8 649.9,528.6 646.3,531.2" fill="#94a100" stroke="#94a100" stroke-width="0.6"/><polygon points="624.4,496.8 646.3,531.2 643.2,532.2" fill="#a3b000" stroke="#a3b000" stroke-width="0.6"/><polygon points="624.4,496.8 643.2,532.2 641,531.5" fill="#b1c000" stroke="#b1c000" stroke-width="0.6"/><line x1="624" y1="496.4" x2="625" y2="497.2" stroke="#ffee00" stroke-width="2"/><polygon points="669.6,544 656.1,563.1 679.1,563.1" fill="#0a98f0"/><ellipse cx="667.4" cy="563.9" rx="11.5" ry="6" fill="#0a78c8" transform="rotate(0 667.4 563.9)"/><line x1="673.5" y1="564.3" x2="674" y2="572.6" stroke="#ffee00" stroke-width="1.6"/><ellipse cx="684.6" cy="542.4" rx="17" ry="17" fill="#10d880" transform="rotate(0 684.6 542.4)"/><ellipse cx="687.8" cy="544.8" rx="16.6" ry="16.6" fill="#10a060" transform="rotate(0 687.8 544.8)"/><line x1="688.3" y1="546" x2="694.1" y2="546" stroke="#ffee00" stroke-width="1.8"/><polygon points="655.3,552.8 633.1,540.6 632.9,541.6" fill="#e32e00" stroke="#e32e00" stroke-width="0.6"/><polygon points="655.3,552.8 632.9,541.6 632.2,544.3" fill="#d92a00" stroke="#d92a00" stroke-width="0.6"/><polygon points="655.3,552.8 632.2,544.3 631.2,548.4" fill="#cf2600" stroke="#cf2600" stroke-width="0.6"/><polygon points="655.3,552.8 631.2,548.4 630,553.2" fill="#c52200" stroke="#c52200" stroke-width="0.6"/><polygon points="655.3,552.8 630,553.2 628.9,558.1" fill="#c42100" stroke="#c42100" stroke-width="0.6"/><polygon points="655.3,552.8 628.9,558.1 627.9,562.2" fill="#cc2300" stroke="#cc2300" stroke-width="0.6"/><polygon points="655.3,552.8 627.9,562.2 627.2,564.9" fill="#d42500" stroke="#d42500" stroke-width="0.6"/><polygon points="655.3,552.8 627.2,564.9 627,565.9" fill="#dc2700" stroke="#dc2700" stroke-width="0.6"/><line x1="641.8" y1="561.5" x2="643.4" y2="564.7" stroke="#ffee00" stroke-width="1.6"/><polygon points="563.9,527 583.4,533.7 584.6,549.5" fill="#88f800" stroke="#88f800" stroke-width="0.6"/><polygon points="563.9,527 584.6,549.5 581,553.2" fill="#70d800" stroke="#70d800" stroke-width="0.6"/><polygon points="563.9,527 581,553.2 574.9,557.1" fill="#58b800" stroke="#58b800" stroke-width="0.6"/><polygon points="563.9,527 574.9,557.1 568.8,558" fill="#489c00" stroke="#489c00" stroke-width="0.6"/><polygon points="563.9,527 568.8,558 562.1,556.2" fill="#409000" stroke="#409000" stroke-width="0.6"/><polygon points="563.9,527 562.1,556.2 557.8,552" fill="#48a000" stroke="#48a000" stroke-width="0.6"/><polygon points="563.9,527 557.8,552 556,546.5" fill="#58b800" stroke="#58b800" stroke-width="0.6"/><polygon points="563.9,527 556,546.5 556.6,541" fill="#60c800" stroke="#60c800" stroke-width="0.6"/><polygon points="563.9,527 556.6,541 560.2,533.7" fill="#60c800" stroke="#60c800" stroke-width="0.6"/><line x1="563.7" y1="526.2" x2="564.7" y2="527" stroke="#ffee00" stroke-width="2"/><polygon points="581.8,547.5 583.1,522.2 584.1,522.5" fill="#0010ce" stroke="#0010ce" stroke-width="0.6"/><polygon points="581.8,547.5 584.1,522.5 586.9,523.3" fill="#0010ca" stroke="#0010ca" stroke-width="0.6"/><polygon points="581.8,547.5 586.9,523.3 591.2,524.4" fill="#0010c6" stroke="#0010c6" stroke-width="0.6"/><polygon points="581.8,547.5 591.2,524.4 596.2,525.8" fill="#0010c2" stroke="#0010c2" stroke-width="0.6"/><polygon points="581.8,547.5 596.2,525.8 601.2,527.2" fill="#0111c4" stroke="#0111c4" stroke-width="0.6"/><polygon points="581.8,547.5 601.2,527.2 605.5,528.3" fill="#0313cc" stroke="#0313cc" stroke-width="0.6"/><polygon points="581.8,547.5 605.5,528.3 608.3,529.1" fill="#0515d4" stroke="#0515d4" stroke-width="0.6"/><polygon points="581.8,547.5 608.3,529.1 609.3,529.4" fill="#0717dc" stroke="#0717dc" stroke-width="0.6"/><ellipse cx="596.2" cy="525.8" rx="13.6" ry="10.9" fill="#0818f0" transform="rotate(15.4 596.2 525.8)"/><line x1="596.6" y1="524.2" x2="601.4" y2="518.4" stroke="#ffee00" stroke-width="1.6"/><polygon points="585.9,544.6 615.7,567.2 615.7,567.9" fill="#e82800" stroke="#e82800" stroke-width="0.6"/><polygon points="585.9,544.6 615.7,567.9 615.1,569.1" fill="#e82901" stroke="#e82901" stroke-width="0.6"/><polygon points="585.9,544.6 615.1,569.1 613.8,570.5" fill="#e72e07" stroke="#e72e07" stroke-width="0.6"/><polygon points="585.9,544.6 613.8,570.5 612,572.2" fill="#e43d19" stroke="#e43d19" stroke-width="0.6"/><polygon points="585.9,544.6 612,572.2 609.8,574.1" fill="#dc6245" stroke="#dc6245" stroke-width="0.6"/><polygon points="585.9,544.6 609.8,574.1 607.3,575.9" fill="#d09887" stroke="#d09887" stroke-width="0.6"/><polygon points="585.9,544.6 607.3,575.9 604.7,577.5" fill="#d45e45" stroke="#d45e45" stroke-width="0.6"/><polygon points="585.9,544.6 604.7,577.5 602.2,578.9" fill="#d63c1f" stroke="#d63c1f" stroke-width="0.6"/><polygon points="585.9,544.6 602.2,578.9 600,580" fill="#d72a0b" stroke="#d72a0b" stroke-width="0.6"/><polygon points="585.9,544.6 600,580 598.2,580.7" fill="#d82303" stroke="#d82303" stroke-width="0.6"/><polygon points="585.9,544.6 598.2,580.7 596.9,580.9" fill="#d82000" stroke="#d82000" stroke-width="0.6"/><polygon points="585.9,544.6 596.9,580.9 596.2,580.6" fill="#d82000" stroke="#d82000" stroke-width="0.6"/><line x1="607.7" y1="576.6" x2="613.7" y2="583.7" stroke="#ffee00" stroke-width="1.6"/><polygon points="531.3,511.5 576.8,494.1 576.8,495.3" fill="#c47800" stroke="#c47800" stroke-width="0.6"/><polygon points="531.3,511.5 576.8,495.3 577,498.7" fill="#ac6800" stroke="#ac6800" stroke-width="0.6"/><polygon points="531.3,511.5 577,498.7 577.1,503.9" fill="#945800" stroke="#945800" stroke-width="0.6"/><polygon points="531.3,511.5 577.1,503.9 577.3,509.9" fill="#7c4800" stroke="#7c4800" stroke-width="0.6"/><polygon points="531.3,511.5 577.3,509.9 577.6,516" fill="#7b4700" stroke="#7b4700" stroke-width="0.6"/><polygon points="531.3,511.5 577.6,516 577.7,521.2" fill="#915500" stroke="#915500" stroke-width="0.6"/><polygon points="531.3,511.5 577.7,521.2 577.9,524.6" fill="#a76300" stroke="#a76300" stroke-width="0.6"/><polygon points="531.3,511.5 577.9,524.6 577.9,525.8" fill="#bd7100" stroke="#bd7100" stroke-width="0.6"/><ellipse cx="577.3" cy="509.9" rx="15.9" ry="0.3" fill="#a06000" transform="rotate(88 577.3 509.9)"/><line x1="577.9" y1="510.1" x2="591.1" y2="510.1" stroke="#ffee00" stroke-width="1.6"/><line x1="531" y1="511.1" x2="532" y2="511.9" stroke="#ffee00" stroke-width="2"/><ellipse cx="726.2" cy="494.9" rx="5.5" ry="11" fill="#00e830" transform="rotate(-25 726.2 494.9)"/><polygon points="743.1,516.3 727,478 727.5,477.8" fill="#5a00c8" stroke="#5a00c8" stroke-width="0.6"/><polygon points="743.1,516.3 727.5,477.8 729.1,477.6" fill="#5b01c8" stroke="#5b01c8" stroke-width="0.6"/><polygon points="743.1,516.3 729.1,477.6 731.5,477.3" fill="#5d06c8" stroke="#5d06c8" stroke-width="0.6"/><polygon points="743.1,516.3 731.5,477.3 734.7,477.1" fill="#6412c8" stroke="#6412c8" stroke-width="0.6"/><polygon points="743.1,516.3 734.7,477.1 738.4,477" fill="#722cc8" stroke="#722cc8" stroke-width="0.6"/><polygon points="743.1,516.3 738.4,477 742.4,476.8" fill="#8b58c8" stroke="#8b58c8" stroke-width="0.6"/><polygon points="743.1,516.3 742.4,476.8 746.4,476.8" fill="#8858ca" stroke="#8858ca" stroke-width="0.6"/><polygon points="743.1,516.3 746.4,476.8 750.2,476.7" fill="#6c2ccd" stroke="#6c2ccd" stroke-width="0.6"/><polygon points="743.1,516.3 750.2,476.7 753.4,476.8" fill="#5c12cf" stroke="#5c12cf" stroke-width="0.6"/><polygon points="743.1,516.3 753.4,476.8 755.8,476.9" fill="#5406d0" stroke="#5406d0" stroke-width="0.6"/><polygon points="743.1,516.3 755.8,476.9 757.4,477" fill="#5101d0" stroke="#5101d0" stroke-width="0.6"/><polygon points="743.1,516.3 757.4,477 757.9,477.2" fill="#5000d0" stroke="#5000d0" stroke-width="0.6"/><polygon points="679.9,523.4 708.5,485.5 709.2,486.6" fill="#85dc00" stroke="#85dc00" stroke-width="0.6"/><polygon points="679.9,523.4 709.2,486.6 711.4,489.6" fill="#7fd400" stroke="#7fd400" stroke-width="0.6"/><polygon points="679.9,523.4 711.4,489.6 714.5,494.1" fill="#79cc00" stroke="#79cc00" stroke-width="0.6"/><polygon points="679.9,523.4 714.5,494.1 718.2,499.5" fill="#73c400" stroke="#73c400" stroke-width="0.6"/><polygon points="679.9,523.4 718.2,499.5 722,504.9" fill="#71c200" stroke="#71c200" stroke-width="0.6"/><polygon points="679.9,523.4 722,504.9 725.1,509.4" fill="#73c600" stroke="#73c600" stroke-width="0.6"/><polygon points="679.9,523.4 725.1,509.4 727.3,512.4" fill="#75ca00" stroke="#75ca00" stroke-width="0.6"/><polygon points="679.9,523.4 727.3,512.4 728,513.5" fill="#77ce00" stroke="#77ce00" stroke-width="0.6"/><ellipse cx="718.2" cy="499.5" rx="17.1" ry="7.2" fill="#90f000" transform="rotate(55.1 718.2 499.5)"/><line x1="717.4" y1="501.2" x2="728.5" y2="494.9" stroke="#ffee00" stroke-width="1.6"/><polygon points="713.5,529 737.3,511.5 740.1,512.5" fill="#04b942" stroke="#04b942" stroke-width="0.6"/><polygon points="713.5,529 740.1,512.5 742.6,515.8" fill="#0cab46" stroke="#0cab46" stroke-width="0.6"/><polygon points="713.5,529 742.6,515.8 744.4,520.9" fill="#149d4a" stroke="#149d4a" stroke-width="0.6"/><polygon points="713.5,529 744.4,520.9 745.2,526.9" fill="#1c8f4e" stroke="#1c8f4e" stroke-width="0.6"/><polygon points="713.5,529 745.2,526.9 745,533.1" fill="#1c904d" stroke="#1c904d" stroke-width="0.6"/><polygon points="713.5,529 745,533.1 743.7,538.3" fill="#14a047" stroke="#14a047" stroke-width="0.6"/><polygon points="713.5,529 743.7,538.3 741.6,541.9" fill="#0cb041" stroke="#0cb041" stroke-width="0.6"/><polygon points="713.5,529 741.6,541.9 738.9,543.3" fill="#04c03b" stroke="#04c03b" stroke-width="0.6"/><line x1="713.1" y1="528.6" x2="714.1" y2="529.4" stroke="#ffee00" stroke-width="2"/><polygon points="675.9,567.5 715.1,550.4 717.5,551.1" fill="#df0500" stroke="#df0500" stroke-width="0.6"/><polygon points="675.9,567.5 717.5,551.1 719.8,552.9" fill="#d80803" stroke="#d80803" stroke-width="0.6"/><polygon points="675.9,567.5 719.8,552.9 721.8,555.8" fill="#cc0d08" stroke="#cc0d08" stroke-width="0.6"/><polygon points="675.9,567.5 721.8,555.8 723.3,559.5" fill="#bc150f" stroke="#bc150f" stroke-width="0.6"/><polygon points="675.9,567.5 723.3,559.5 724.4,563.8" fill="#a71e18" stroke="#a71e18" stroke-width="0.6"/><polygon points="675.9,567.5 724.4,563.8 724.8,568.4" fill="#8e2a22" stroke="#8e2a22" stroke-width="0.6"/><polygon points="675.9,567.5 724.8,568.4 724.6,573" fill="#8b2922" stroke="#8b2922" stroke-width="0.6"/><polygon points="675.9,567.5 724.6,573 723.7,577.3" fill="#9f1d18" stroke="#9f1d18" stroke-width="0.6"/><polygon points="675.9,567.5 723.7,577.3 722.3,581" fill="#af120f" stroke="#af120f" stroke-width="0.6"/><polygon points="675.9,567.5 722.3,581 720.5,583.8" fill="#bc0a08" stroke="#bc0a08" stroke-width="0.6"/><polygon points="675.9,567.5 720.5,583.8 718.3,585.5" fill="#c60403" stroke="#c60403" stroke-width="0.6"/><polygon points="675.9,567.5 718.3,585.5 715.9,586.1" fill="#cb0100" stroke="#cb0100" stroke-width="0.6"/><line x1="724.8" y1="567.8" x2="725.8" y2="568.3" stroke="#ffee00" stroke-width="2"/><polygon points="779.3,514.7 768.5,532 795,529" fill="#18d0f0"/><ellipse cx="781.5" cy="533.5" rx="13.3" ry="8.3" fill="#10a0c0" transform="rotate(-6 781.5 533.5)"/><polygon points="724.1,548 783.7,531.4 783.7,532.8" fill="#d58100" stroke="#d58100" stroke-width="0.6"/><polygon points="724.1,548 783.7,532.8 783.6,536.7" fill="#c07300" stroke="#c07300" stroke-width="0.6"/><polygon points="724.1,548 783.6,536.7 783.6,542.6" fill="#aa6500" stroke="#aa6500" stroke-width="0.6"/><polygon points="724.1,548 783.6,542.6 783.5,549.6" fill="#955700" stroke="#955700" stroke-width="0.6"/><polygon points="724.1,548 783.5,549.6 783.4,556.6" fill="#955600" stroke="#955600" stroke-width="0.6"/><polygon points="724.1,548 783.4,556.6 783.4,562.5" fill="#aa6200" stroke="#aa6200" stroke-width="0.6"/><polygon points="724.1,548 783.4,562.5 783.3,566.4" fill="#c06e00" stroke="#c06e00" stroke-width="0.6"/><polygon points="724.1,548 783.3,566.4 783.3,567.8" fill="#d57a00" stroke="#d57a00" stroke-width="0.6"/><line x1="784" y1="550.1" x2="800.7" y2="550.1" stroke="#ffee00" stroke-width="1.8"/><line x1="723.7" y1="547.6" x2="724.7" y2="548.4" stroke="#ffee00" stroke-width="2"/><polygon points="816.6,470 801.5,501.5 802.6,501.6" fill="#0fa1d8" stroke="#0fa1d8" stroke-width="0.6"/><polygon points="816.6,470 802.6,501.6 805.8,501.8" fill="#0d93c8" stroke="#0d93c8" stroke-width="0.6"/><polygon points="816.6,470 805.8,501.8 810.5,502.1" fill="#0b85b8" stroke="#0b85b8" stroke-width="0.6"/><polygon points="816.6,470 810.5,502.1 816.1,502.6" fill="#0977a8" stroke="#0977a8" stroke-width="0.6"/><polygon points="816.6,470 816.1,502.6 821.8,503" fill="#0975a6" stroke="#0975a6" stroke-width="0.6"/><polygon points="816.6,470 821.8,503 826.5,503.3" fill="#0b7fb2" stroke="#0b7fb2" stroke-width="0.6"/><polygon points="816.6,470 826.5,503.3 829.7,503.5" fill="#0d89be" stroke="#0d89be" stroke-width="0.6"/><polygon points="816.6,470 829.7,503.5 830.8,503.6" fill="#0f93ca" stroke="#0f93ca" stroke-width="0.6"/><line x1="809.4" y1="479.8" x2="801.5" y2="500.4" stroke="#e8b000" stroke-width="2.4"/><polygon points="824.5,481.4 827.7,480.9 830.8,491.7 828,491" fill="#d83010"/><polygon points="827.7,480.6 857,494.1 856.6,495" fill="#14ce74" stroke="#14ce74" stroke-width="0.6"/><polygon points="827.7,480.6 856.6,495 854.7,496.8" fill="#1cba6c" stroke="#1cba6c" stroke-width="0.6"/><polygon points="827.7,480.6 854.7,496.8 851.7,499.3" fill="#24a664" stroke="#24a664" stroke-width="0.6"/><polygon points="827.7,480.6 851.7,499.3 847.9,502.1" fill="#2c925c" stroke="#2c925c" stroke-width="0.6"/><polygon points="827.7,480.6 847.9,502.1 844.1,504.8" fill="#2a9159" stroke="#2a9159" stroke-width="0.6"/><polygon points="827.7,480.6 844.1,504.8 840.7,506.9" fill="#1ea35b" stroke="#1ea35b" stroke-width="0.6"/><polygon points="827.7,480.6 840.7,506.9 838.3,508.2" fill="#12b55d" stroke="#12b55d" stroke-width="0.6"/><polygon points="827.7,480.6 838.3,508.2 837.2,508.4" fill="#06c75f" stroke="#06c75f" stroke-width="0.6"/><line x1="849.1" y1="503.6" x2="853.5" y2="508.4" stroke="#ffee00" stroke-width="1.6"/><polygon points="790.7,478.8 825.3,443.6 825.8,445" fill="#0a66ee" stroke="#0a66ee" stroke-width="0.6"/><polygon points="790.7,478.8 825.8,445 827.4,449" fill="#0a62ea" stroke="#0a62ea" stroke-width="0.6"/><polygon points="790.7,478.8 827.4,449 829.7,455" fill="#0a5ee6" stroke="#0a5ee6" stroke-width="0.6"/><polygon points="790.7,478.8 829.7,455 832.4,462" fill="#0a5ae2" stroke="#0a5ae2" stroke-width="0.6"/><polygon points="790.7,478.8 832.4,462 835.1,469" fill="#0a5ae2" stroke="#0a5ae2" stroke-width="0.6"/><polygon points="790.7,478.8 835.1,469 837.4,475" fill="#0a5ee6" stroke="#0a5ee6" stroke-width="0.6"/><polygon points="790.7,478.8 837.4,475 839,479" fill="#0a62ea" stroke="#0a62ea" stroke-width="0.6"/><polygon points="790.7,478.8 839,479 839.5,480.4" fill="#0a66ee" stroke="#0a66ee" stroke-width="0.6"/><ellipse cx="832.4" cy="462" rx="19.7" ry="12.8" fill="#0848c8" transform="rotate(68.9 832.4 462)"/><line x1="831.3" y1="462.3" x2="844" y2="456.6" stroke="#ffee00" stroke-width="1.6"/><polygon points="777.7,502 795.4,492.2 799,494.6" fill="#00cb2f" stroke="#00cb2f" stroke-width="0.6"/><polygon points="777.7,502 799,494.6 802.2,499.1" fill="#00c12d" stroke="#00c12d" stroke-width="0.6"/><polygon points="777.7,502 802.2,499.1 804.5,505" fill="#00b72b" stroke="#00b72b" stroke-width="0.6"/><polygon points="777.7,502 804.5,505 805.6,511.5" fill="#00ad29" stroke="#00ad29" stroke-width="0.6"/><polygon points="777.7,502 805.6,511.5 805.3,517.4" fill="#04af2b" stroke="#04af2b" stroke-width="0.6"/><polygon points="777.7,502 805.3,517.4 803.7,522" fill="#0cbd31" stroke="#0cbd31" stroke-width="0.6"/><polygon points="777.7,502 803.7,522 800.9,524.5" fill="#14cb37" stroke="#14cb37" stroke-width="0.6"/><polygon points="777.7,502 800.9,524.5 797.5,524.5" fill="#1cd93d" stroke="#1cd93d" stroke-width="0.6"/><polygon points="784.3,514.3 794.8,519.9 794.8,528.8 788.7,522.1" fill="#50d000"/><line x1="777.3" y1="501.6" x2="778.3" y2="502.4" stroke="#ffee00" stroke-width="2"/><polygon points="788,513.1 821.8,493 822,494" fill="#17d0f0" stroke="#17d0f0" stroke-width="0.6"/><polygon points="788,513.1 822,494 822.4,496.7" fill="#15c0e0" stroke="#15c0e0" stroke-width="0.6"/><polygon points="788,513.1 822.4,496.7 823.1,500.8" fill="#13b0d0" stroke="#13b0d0" stroke-width="0.6"/><polygon points="788,513.1 823.1,500.8 824,505.7" fill="#11a0c0" stroke="#11a0c0" stroke-width="0.6"/><polygon points="788,513.1 824,505.7 824.8,510.6" fill="#1099b9" stroke="#1099b9" stroke-width="0.6"/><polygon points="788,513.1 824.8,510.6 825.5,514.7" fill="#109bbb" stroke="#109bbb" stroke-width="0.6"/><polygon points="788,513.1 825.5,514.7 825.9,517.4" fill="#109dbd" stroke="#109dbd" stroke-width="0.6"/><polygon points="788,513.1 825.9,517.4 826.1,518.4" fill="#109fbf" stroke="#109fbf" stroke-width="0.6"/><line x1="824.5" y1="506" x2="832.4" y2="503.6" stroke="#ffee00" stroke-width="1.6"/><line x1="786.5" y1="513.8" x2="788.5" y2="514.4" stroke="#ffee00" stroke-width="2"/><polygon points="849.9,517.9 836.4,529.8 837.3,530.3" fill="#0818de" stroke="#0818de" stroke-width="0.6"/><polygon points="849.9,517.9 837.3,530.3 839.8,531.7" fill="#0818da" stroke="#0818da" stroke-width="0.6"/><polygon points="849.9,517.9 839.8,531.7 843.6,533.7" fill="#0818d6" stroke="#0818d6" stroke-width="0.6"/><polygon points="849.9,517.9 843.6,533.7 848.1,536.1" fill="#0818d2" stroke="#0818d2" stroke-width="0.6"/><polygon points="849.9,517.9 848.1,536.1 852.6,538.6" fill="#0717ca" stroke="#0717ca" stroke-width="0.6"/><polygon points="849.9,517.9 852.6,538.6 856.4,540.6" fill="#0515be" stroke="#0515be" stroke-width="0.6"/><polygon points="849.9,517.9 856.4,540.6 858.9,542" fill="#0313b2" stroke="#0313b2" stroke-width="0.6"/><polygon points="849.9,517.9 858.9,542 859.8,542.5" fill="#0111a6" stroke="#0111a6" stroke-width="0.6"/><line x1="857.3" y1="529" x2="863.7" y2="526.9" stroke="#ffee00" stroke-width="1.6"/><ellipse cx="840.8" cy="546.4" rx="16.6" ry="16.3" fill="#782008" transform="rotate(0 840.8 546.4)"/><line x1="839.9" y1="546.1" x2="842.7" y2="547.5" stroke="#ffee00" stroke-width="1.8"/><line x1="824" y1="540" x2="825" y2="541.5" stroke="#ffee00" stroke-width="2"/><polygon points="783.7,552 832.9,550.4 832.4,551.6" fill="#001fed" stroke="#001fed" stroke-width="0.6"/><polygon points="783.7,552 832.4,551.6 831.1,555" fill="#001de7" stroke="#001de7" stroke-width="0.6"/><polygon points="783.7,552 831.1,555 829.2,560.1" fill="#001be1" stroke="#001be1" stroke-width="0.6"/><polygon points="783.7,552 829.2,560.1 826.8,566.1" fill="#0019db" stroke="#0019db" stroke-width="0.6"/><polygon points="783.7,552 826.8,566.1 824.5,572.1" fill="#0017d6" stroke="#0017d6" stroke-width="0.6"/><polygon points="783.7,552 824.5,572.1 822.6,577.2" fill="#0015d2" stroke="#0015d2" stroke-width="0.6"/><polygon points="783.7,552 822.6,577.2 821.3,580.6" fill="#0013ce" stroke="#0013ce" stroke-width="0.6"/><polygon points="783.7,552 821.3,580.6 820.8,581.8" fill="#0011ca" stroke="#0011ca" stroke-width="0.6"/><ellipse cx="826.8" cy="566.1" rx="16.8" ry="5" fill="#0818d8" transform="rotate(111.1 826.8 566.1)"/><line x1="825.3" y1="565.9" x2="839.9" y2="571" stroke="#ffee00" stroke-width="1.6"/></svg><svg class="a" style="left:643px;top:699px" width="8" height="5"><path d="M0.8,0.6 L4,3.8 L7.2,0.6" fill="none" stroke="#000" stroke-width="1.6"/></svg><svg class="a" style="left:743px;top:699px" width="8" height="5"><path d="M0.8,0.6 L4,3.8 L7.2,0.6" fill="none" stroke="#000" stroke-width="1.6"/></svg><svg class="a" style="left:653px;top:701px" width="90" height="1" shape-rendering="crispEdges"><path d="M0,0.5 H90" stroke="#555" stroke-dasharray="1,2"/></svg><div class="a tab" style="left:314px;top:705px;width:71px;height:21px;"></div><div class="t" style="left:320px;top:708px;">Command</div><div class="a " style="left:385px;top:725px;width:693px;height:1px;background:#fff"></div><div class="t" style="left:324px;top:734px;">Command (local):</div><div class="a sunk2" style="left:433px;top:731px;width:635px;height:21px;"></div><div class="a " style="left:1051px;top:732px;width:16px;height:18px;border:1px solid #8a8a8a;background:#e8e8e8"></div><svg class="a" style="left:1055px;top:739px" width="8" height="4"><path d="M0,0 L4,4 L8,0 z" fill="#000"/></svg><div class="a sunk2" style="left:319px;top:759px;width:754px;height:37px;box-shadow:inset 0 0 0 2px #f0f0f0"></div><div class="a " style="left:314px;top:800px;width:764px;height:1px;background:#8a8a8a"></div><div class="a " style="left:56px;top:803px;width:1024px;height:1px;background:#8a8a8a"></div><div class="a " style="left:56px;top:821px;width:1024px;height:1px;background:#fff"></div><div class="a " style="left:390px;top:803px;width:2px;height:18px;background:#fff"></div><div class="a " style="left:393px;top:803px;width:1px;height:18px;background:#8a8a8a"></div><div class="a " style="left:492px;top:803px;width:2px;height:18px;background:#fff"></div><div class="a " style="left:495px;top:803px;width:1px;height:18px;background:#8a8a8a"></div><div class="a " style="left:594px;top:803px;width:2px;height:18px;background:#fff"></div><div class="a " style="left:597px;top:803px;width:1px;height:18px;background:#8a8a8a"></div><svg class="a" style="left:1066px;top:808px" width="13" height="13"><path d="M1,13 L13,1 M5,13 L13,5 M9,13 L13,9" stroke="#8a8a8a" stroke-width="1"/><path d="M2,13 L13,2 M6,13 L13,6 M10,13 L13,10" stroke="#fff" stroke-width="1"/></svg></div></body></html>
